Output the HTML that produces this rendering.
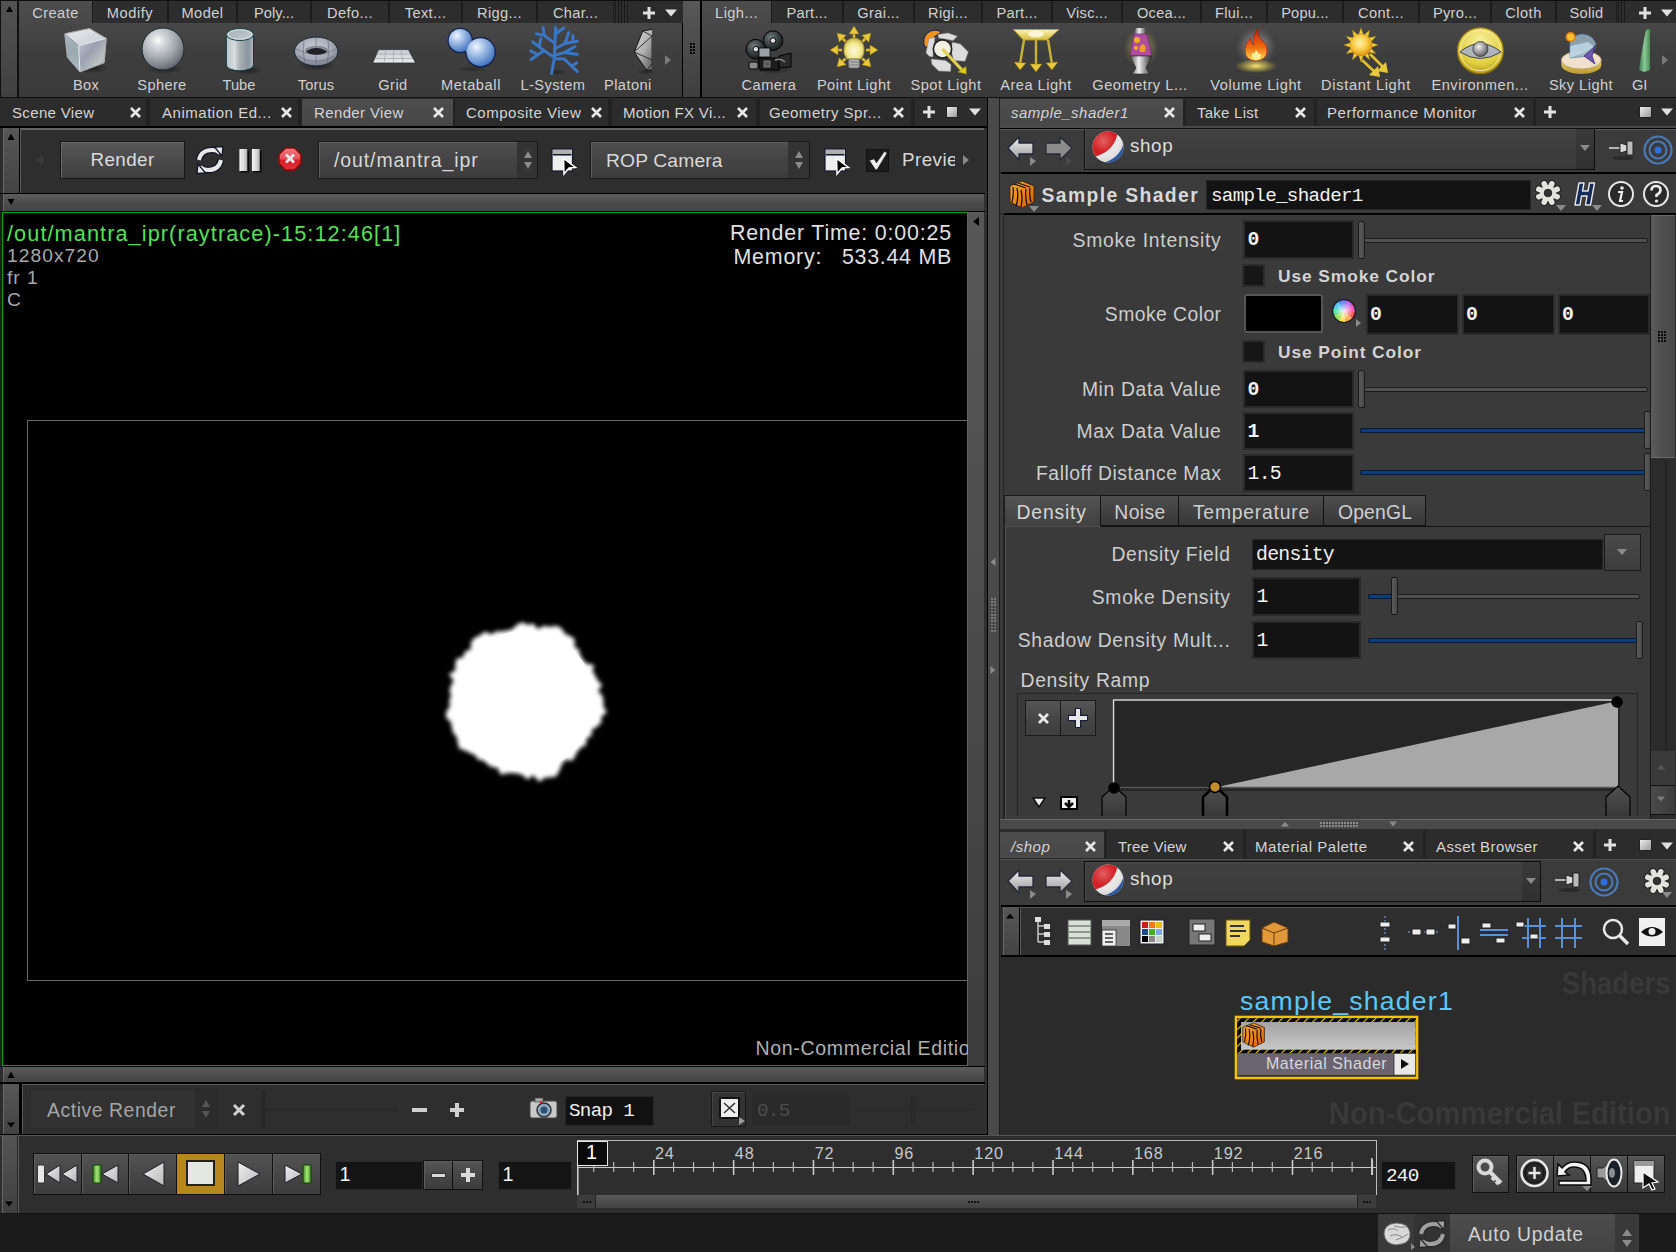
<!DOCTYPE html><html><head><meta charset="utf-8"><style>
html,body{margin:0;padding:0;}
body{width:1676px;height:1252px;overflow:hidden;position:relative;background:#3a3a3a;font-family:'Liberation Sans',sans-serif;}
body>div,body>svg{position:absolute;box-sizing:border-box;}
</style></head><body>
<div style="left:0px;top:0px;width:1676px;height:98px;background:#101010;"></div>
<div style="left:1px;top:1px;width:16px;height:96px;background:linear-gradient(#535353,#404040);"></div>
<svg style="left:4px;top:4px;" width="10" height="10" viewBox="0 0 10 10"><path d="M5.5 2 L9 8 L2 8 Z" fill="#000"/></svg>
<div style="left:19px;top:1px;width:664px;height:22px;background:#2d2d2d;"></div>
<div style="left:615px;top:1px;width:1px;height:22px;background:#1a1a1a;"></div>
<div style="left:618px;top:1px;width:1px;height:22px;background:#1a1a1a;"></div>
<div style="left:621px;top:1px;width:1px;height:22px;background:#1a1a1a;"></div>
<div style="left:624px;top:1px;width:1px;height:22px;background:#1a1a1a;"></div>
<div style="left:627px;top:1px;width:1px;height:22px;background:#1a1a1a;"></div>
<div style="left:630px;top:1px;width:53px;height:22px;background:#2b2b2b;"></div>
<div style="left:19px;top:23px;width:663px;height:74px;background:linear-gradient(#484848,#3e3e3e 40%,#3a3a3a);"></div>
<div style="left:682px;top:23px;width:1px;height:74px;background:#000;"></div>
<div style="left:683px;top:1px;width:17px;height:96px;background:linear-gradient(#585858,#3e3e3e);"></div>
<div style="left:690px;top:43px;width:2px;height:2px;background:#000;"></div>
<div style="left:693px;top:43px;width:2px;height:2px;background:#000;"></div>
<div style="left:690px;top:46px;width:2px;height:2px;background:#000;"></div>
<div style="left:693px;top:46px;width:2px;height:2px;background:#000;"></div>
<div style="left:690px;top:49px;width:2px;height:2px;background:#000;"></div>
<div style="left:693px;top:49px;width:2px;height:2px;background:#000;"></div>
<div style="left:690px;top:52px;width:2px;height:2px;background:#000;"></div>
<div style="left:693px;top:52px;width:2px;height:2px;background:#000;"></div>
<div style="left:700px;top:1px;width:2px;height:96px;background:#000;"></div>
<div style="left:702px;top:1px;width:974px;height:22px;background:#2d2d2d;"></div>
<div style="left:1618px;top:1px;width:1px;height:22px;background:#1a1a1a;"></div>
<div style="left:1621px;top:1px;width:1px;height:22px;background:#1a1a1a;"></div>
<div style="left:1624px;top:1px;width:1px;height:22px;background:#1a1a1a;"></div>
<div style="left:702px;top:23px;width:974px;height:74px;background:linear-gradient(#484848,#3e3e3e 40%,#3a3a3a);"></div>
<div style="left:19px;top:1px;width:73px;height:23px;background:linear-gradient(#4c4c4c,#484848);"></div>
<div style="left:32.2px;top:5.6px;font-size:14.63px;line-height:14.63px;font-family:'Liberation Sans',sans-serif;color:#d0d0d0;letter-spacing:0.435px;white-space:pre;">Create</div>
<div style="left:92px;top:1px;width:76px;height:22px;background:#2d2d2d;border-left:1px solid #1c1c1c;border-right:1px solid #1c1c1c;"></div>
<div style="left:106.8px;top:5.6px;font-size:14.63px;line-height:14.63px;font-family:'Liberation Sans',sans-serif;color:#d0d0d0;letter-spacing:0.551px;white-space:pre;">Modify</div>
<div style="left:168px;top:1px;width:69px;height:22px;background:#2d2d2d;border-left:1px solid #1c1c1c;border-right:1px solid #1c1c1c;"></div>
<div style="left:181.5px;top:5.6px;font-size:14.63px;line-height:14.63px;font-family:'Liberation Sans',sans-serif;color:#d0d0d0;letter-spacing:0.439px;white-space:pre;">Model</div>
<div style="left:237px;top:1px;width:74px;height:22px;background:#2d2d2d;border-left:1px solid #1c1c1c;border-right:1px solid #1c1c1c;"></div>
<div style="left:254.0px;top:5.6px;font-size:14.63px;line-height:14.63px;font-family:'Liberation Sans',sans-serif;color:#d0d0d0;letter-spacing:0.067px;white-space:pre;">Poly...</div>
<div style="left:311px;top:1px;width:78px;height:22px;background:#2d2d2d;border-left:1px solid #1c1c1c;border-right:1px solid #1c1c1c;"></div>
<div style="left:327.0px;top:5.6px;font-size:14.63px;line-height:14.63px;font-family:'Liberation Sans',sans-serif;color:#d0d0d0;letter-spacing:0.414px;white-space:pre;">Defo...</div>
<div style="left:389px;top:1px;width:73px;height:22px;background:#2d2d2d;border-left:1px solid #1c1c1c;border-right:1px solid #1c1c1c;"></div>
<div style="left:404.7px;top:5.6px;font-size:14.63px;line-height:14.63px;font-family:'Liberation Sans',sans-serif;color:#d0d0d0;letter-spacing:0.377px;white-space:pre;">Text...</div>
<div style="left:462px;top:1px;width:75px;height:22px;background:#2d2d2d;border-left:1px solid #1c1c1c;border-right:1px solid #1c1c1c;"></div>
<div style="left:477.1px;top:5.6px;font-size:14.63px;line-height:14.63px;font-family:'Liberation Sans',sans-serif;color:#d0d0d0;letter-spacing:0.351px;white-space:pre;">Rigg...</div>
<div style="left:537px;top:1px;width:77px;height:22px;background:#2d2d2d;border-left:1px solid #1c1c1c;border-right:1px solid #1c1c1c;"></div>
<div style="left:553.0px;top:5.6px;font-size:14.63px;line-height:14.63px;font-family:'Liberation Sans',sans-serif;color:#d0d0d0;letter-spacing:0.279px;white-space:pre;">Char...</div>
<div style="left:702px;top:1px;width:69px;height:23px;background:linear-gradient(#4c4c4c,#484848);"></div>
<div style="left:715.1px;top:5.6px;font-size:14.63px;line-height:14.63px;font-family:'Liberation Sans',sans-serif;color:#d0d0d0;letter-spacing:0.421px;white-space:pre;">Ligh...</div>
<div style="left:771px;top:1px;width:72px;height:22px;background:#2d2d2d;border-left:1px solid #1c1c1c;border-right:1px solid #1c1c1c;"></div>
<div style="left:786.5px;top:5.6px;font-size:14.63px;line-height:14.63px;font-family:'Liberation Sans',sans-serif;color:#d0d0d0;letter-spacing:0.280px;white-space:pre;">Part...</div>
<div style="left:843px;top:1px;width:71px;height:22px;background:#2d2d2d;border-left:1px solid #1c1c1c;border-right:1px solid #1c1c1c;"></div>
<div style="left:857.3px;top:5.6px;font-size:14.63px;line-height:14.63px;font-family:'Liberation Sans',sans-serif;color:#d0d0d0;letter-spacing:0.370px;white-space:pre;">Grai...</div>
<div style="left:914px;top:1px;width:68px;height:22px;background:#2d2d2d;border-left:1px solid #1c1c1c;border-right:1px solid #1c1c1c;"></div>
<div style="left:928.1px;top:5.6px;font-size:14.63px;line-height:14.63px;font-family:'Liberation Sans',sans-serif;color:#d0d0d0;letter-spacing:0.335px;white-space:pre;">Rigi...</div>
<div style="left:982px;top:1px;width:70px;height:22px;background:#2d2d2d;border-left:1px solid #1c1c1c;border-right:1px solid #1c1c1c;"></div>
<div style="left:996.5px;top:5.6px;font-size:14.63px;line-height:14.63px;font-family:'Liberation Sans',sans-serif;color:#d0d0d0;letter-spacing:0.280px;white-space:pre;">Part...</div>
<div style="left:1052px;top:1px;width:70px;height:22px;background:#2d2d2d;border-left:1px solid #1c1c1c;border-right:1px solid #1c1c1c;"></div>
<div style="left:1066.3px;top:5.6px;font-size:14.63px;line-height:14.63px;font-family:'Liberation Sans',sans-serif;color:#d0d0d0;letter-spacing:0.276px;white-space:pre;">Visc...</div>
<div style="left:1122px;top:1px;width:79px;height:22px;background:#2d2d2d;border-left:1px solid #1c1c1c;border-right:1px solid #1c1c1c;"></div>
<div style="left:1136.9px;top:5.6px;font-size:14.63px;line-height:14.63px;font-family:'Liberation Sans',sans-serif;color:#d0d0d0;letter-spacing:0.300px;white-space:pre;">Ocea...</div>
<div style="left:1201px;top:1px;width:66px;height:22px;background:#2d2d2d;border-left:1px solid #1c1c1c;border-right:1px solid #1c1c1c;"></div>
<div style="left:1215.0px;top:5.6px;font-size:14.63px;line-height:14.63px;font-family:'Liberation Sans',sans-serif;color:#d0d0d0;letter-spacing:0.327px;white-space:pre;">Flui...</div>
<div style="left:1267px;top:1px;width:76px;height:22px;background:#2d2d2d;border-left:1px solid #1c1c1c;border-right:1px solid #1c1c1c;"></div>
<div style="left:1281.2px;top:5.6px;font-size:14.63px;line-height:14.63px;font-family:'Liberation Sans',sans-serif;color:#d0d0d0;letter-spacing:0.180px;white-space:pre;">Popu...</div>
<div style="left:1343px;top:1px;width:76px;height:22px;background:#2d2d2d;border-left:1px solid #1c1c1c;border-right:1px solid #1c1c1c;"></div>
<div style="left:1358.0px;top:5.6px;font-size:14.63px;line-height:14.63px;font-family:'Liberation Sans',sans-serif;color:#d0d0d0;letter-spacing:0.422px;white-space:pre;">Cont...</div>
<div style="left:1419px;top:1px;width:72px;height:22px;background:#2d2d2d;border-left:1px solid #1c1c1c;border-right:1px solid #1c1c1c;"></div>
<div style="left:1433.1px;top:5.6px;font-size:14.63px;line-height:14.63px;font-family:'Liberation Sans',sans-serif;color:#d0d0d0;letter-spacing:0.224px;white-space:pre;">Pyro...</div>
<div style="left:1491px;top:1px;width:65px;height:22px;background:#2d2d2d;border-left:1px solid #1c1c1c;border-right:1px solid #1c1c1c;"></div>
<div style="left:1505.2px;top:5.6px;font-size:14.63px;line-height:14.63px;font-family:'Liberation Sans',sans-serif;color:#d0d0d0;letter-spacing:0.488px;white-space:pre;">Cloth</div>
<div style="left:1556px;top:1px;width:61px;height:22px;background:#2d2d2d;border-left:1px solid #1c1c1c;border-right:1px solid #1c1c1c;"></div>
<div style="left:1569.4px;top:5.6px;font-size:14.63px;line-height:14.63px;font-family:'Liberation Sans',sans-serif;color:#d0d0d0;letter-spacing:0.318px;white-space:pre;">Solid</div>
<svg style="left:641.5px;top:5.5px;" width="14" height="14" viewBox="0 0 14 14"><path d="M7 1 V13 M1 7 H13" stroke="#e0e0e0" stroke-width="3"/></svg>
<svg style="left:665px;top:7px;" width="12" height="12" viewBox="0 0 12 12"><path d="M0 2.4000000000000004 H12 L6 9.600000000000001 Z" fill="#e0e0e0"/></svg>
<svg style="left:1638px;top:5.5px;" width="14" height="14" viewBox="0 0 14 14"><path d="M7 1 V13 M1 7 H13" stroke="#e0e0e0" stroke-width="3"/></svg>
<svg style="left:1661px;top:7px;" width="12" height="12" viewBox="0 0 12 12"><path d="M0 2.4000000000000004 H12 L6 9.600000000000001 Z" fill="#e0e0e0"/></svg>
<svg style="left:663px;top:55px;" width="10" height="10" viewBox="0 0 10 10"><path d="M2.0 0 V10 L8.0 5 Z" fill="#7a7a7a"/></svg>
<svg style="left:1660px;top:55px;" width="10" height="10" viewBox="0 0 10 10"><path d="M2.0 0 V10 L8.0 5 Z" fill="#7a7a7a"/></svg>
<div style="left:73.0px;top:77.6px;font-size:14.63px;line-height:14.63px;font-family:'Liberation Sans',sans-serif;color:#d0d0d0;letter-spacing:0.273px;white-space:pre;">Box</div>
<div style="left:137.3px;top:77.6px;font-size:14.63px;line-height:14.63px;font-family:'Liberation Sans',sans-serif;color:#d0d0d0;letter-spacing:0.359px;white-space:pre;">Sphere</div>
<div style="left:222.6px;top:77.6px;font-size:14.63px;line-height:14.63px;font-family:'Liberation Sans',sans-serif;color:#d0d0d0;letter-spacing:-0.000px;white-space:pre;">Tube</div>
<div style="left:297.7px;top:77.6px;font-size:14.63px;line-height:14.63px;font-family:'Liberation Sans',sans-serif;color:#d0d0d0;letter-spacing:0.178px;white-space:pre;">Torus</div>
<div style="left:378.3px;top:77.6px;font-size:14.63px;line-height:14.63px;font-family:'Liberation Sans',sans-serif;color:#d0d0d0;letter-spacing:0.436px;white-space:pre;">Grid</div>
<div style="left:441.0px;top:77.6px;font-size:14.63px;line-height:14.63px;font-family:'Liberation Sans',sans-serif;color:#d0d0d0;letter-spacing:0.589px;white-space:pre;">Metaball</div>
<div style="left:520.6px;top:77.6px;font-size:14.63px;line-height:14.63px;font-family:'Liberation Sans',sans-serif;color:#d0d0d0;letter-spacing:0.379px;white-space:pre;">L-System</div>
<div style="left:604.0px;top:77.6px;font-size:14.63px;line-height:14.63px;font-family:'Liberation Sans',sans-serif;color:#d0d0d0;letter-spacing:0.428px;white-space:pre;">Platoni</div>
<div style="left:741.5px;top:77.6px;font-size:14.63px;line-height:14.63px;font-family:'Liberation Sans',sans-serif;color:#d0d0d0;letter-spacing:0.485px;white-space:pre;">Camera</div>
<div style="left:816.9px;top:77.6px;font-size:14.63px;line-height:14.63px;font-family:'Liberation Sans',sans-serif;color:#d0d0d0;letter-spacing:0.456px;white-space:pre;">Point Light</div>
<div style="left:910.4px;top:77.6px;font-size:14.63px;line-height:14.63px;font-family:'Liberation Sans',sans-serif;color:#d0d0d0;letter-spacing:0.534px;white-space:pre;">Spot Light</div>
<div style="left:1000.2px;top:77.6px;font-size:14.63px;line-height:14.63px;font-family:'Liberation Sans',sans-serif;color:#d0d0d0;letter-spacing:0.492px;white-space:pre;">Area Light</div>
<div style="left:1092.3px;top:77.6px;font-size:14.63px;line-height:14.63px;font-family:'Liberation Sans',sans-serif;color:#d0d0d0;letter-spacing:0.522px;white-space:pre;">Geometry L...</div>
<div style="left:1210.3px;top:77.6px;font-size:14.63px;line-height:14.63px;font-family:'Liberation Sans',sans-serif;color:#d0d0d0;letter-spacing:0.573px;white-space:pre;">Volume Light</div>
<div style="left:1321.1px;top:77.6px;font-size:14.63px;line-height:14.63px;font-family:'Liberation Sans',sans-serif;color:#d0d0d0;letter-spacing:0.651px;white-space:pre;">Distant Light</div>
<div style="left:1431.4px;top:77.6px;font-size:14.63px;line-height:14.63px;font-family:'Liberation Sans',sans-serif;color:#d0d0d0;letter-spacing:0.538px;white-space:pre;">Environmen...</div>
<div style="left:1548.9px;top:77.6px;font-size:14.63px;line-height:14.63px;font-family:'Liberation Sans',sans-serif;color:#d0d0d0;letter-spacing:0.444px;white-space:pre;">Sky Light</div>
<div style="left:1632.0px;top:77.6px;font-size:14.63px;line-height:14.63px;font-family:'Liberation Sans',sans-serif;color:#d0d0d0;letter-spacing:-0.233px;white-space:pre;">GI</div>
<div style="left:0px;top:98px;width:1676px;height:1037px;background:#2c2c2c;"></div>
<div style="left:0px;top:98px;width:987px;height:28px;background:#2c2c2c;"></div>
<div style="left:0px;top:126px;width:987px;height:2px;background:#000;"></div>
<div style="left:146px;top:99px;width:4px;height:27px;background:#222;"></div>
<div style="left:298px;top:99px;width:4px;height:27px;background:#222;"></div>
<div style="left:451px;top:99px;width:4px;height:27px;background:#222;"></div>
<div style="left:608px;top:99px;width:4px;height:27px;background:#222;"></div>
<div style="left:756px;top:99px;width:4px;height:27px;background:#222;"></div>
<div style="left:911px;top:99px;width:4px;height:27px;background:#222;"></div>
<div style="left:302px;top:99px;width:151px;height:27px;background:linear-gradient(#4d4d4d,#474747);"></div>
<div style="left:12.0px;top:105.3px;font-size:15.00px;line-height:15.00px;font-family:'Liberation Sans',sans-serif;color:#d4d4d4;letter-spacing:0.345px;white-space:pre;">Scene View</div>
<svg style="left:128.5px;top:105.5px;" width="13.0" height="13.0" viewBox="0 0 13.0 13.0"><path d="M2 2 L11.0 11.0 M11.0 2 L2 11.0" stroke="#e8e8e8" stroke-width="2.6" stroke-linecap="butt"/></svg>
<div style="left:162.0px;top:105.3px;font-size:15.00px;line-height:15.00px;font-family:'Liberation Sans',sans-serif;color:#d4d4d4;letter-spacing:0.526px;white-space:pre;">Animation Ed...</div>
<svg style="left:279.5px;top:105.5px;" width="13.0" height="13.0" viewBox="0 0 13.0 13.0"><path d="M2 2 L11.0 11.0 M11.0 2 L2 11.0" stroke="#e8e8e8" stroke-width="2.6" stroke-linecap="butt"/></svg>
<div style="left:314.0px;top:105.3px;font-size:15.00px;line-height:15.00px;font-family:'Liberation Sans',sans-serif;color:#d4d4d4;letter-spacing:0.375px;white-space:pre;">Render View</div>
<svg style="left:432.0px;top:105.5px;" width="13.0" height="13.0" viewBox="0 0 13.0 13.0"><path d="M2 2 L11.0 11.0 M11.0 2 L2 11.0" stroke="#e8e8e8" stroke-width="2.6" stroke-linecap="butt"/></svg>
<div style="left:466.0px;top:105.3px;font-size:15.00px;line-height:15.00px;font-family:'Liberation Sans',sans-serif;color:#d4d4d4;letter-spacing:0.509px;white-space:pre;">Composite View</div>
<svg style="left:589.5px;top:105.5px;" width="13.0" height="13.0" viewBox="0 0 13.0 13.0"><path d="M2 2 L11.0 11.0 M11.0 2 L2 11.0" stroke="#e8e8e8" stroke-width="2.6" stroke-linecap="butt"/></svg>
<div style="left:623.0px;top:105.3px;font-size:15.00px;line-height:15.00px;font-family:'Liberation Sans',sans-serif;color:#d4d4d4;letter-spacing:0.331px;white-space:pre;">Motion FX Vi...</div>
<svg style="left:735.5px;top:105.5px;" width="13.0" height="13.0" viewBox="0 0 13.0 13.0"><path d="M2 2 L11.0 11.0 M11.0 2 L2 11.0" stroke="#e8e8e8" stroke-width="2.6" stroke-linecap="butt"/></svg>
<div style="left:769.0px;top:105.3px;font-size:15.00px;line-height:15.00px;font-family:'Liberation Sans',sans-serif;color:#d4d4d4;letter-spacing:0.507px;white-space:pre;">Geometry Spr...</div>
<svg style="left:891.5px;top:105.5px;" width="13.0" height="13.0" viewBox="0 0 13.0 13.0"><path d="M2 2 L11.0 11.0 M11.0 2 L2 11.0" stroke="#e8e8e8" stroke-width="2.6" stroke-linecap="butt"/></svg>
<svg style="left:922px;top:105px;" width="14" height="14" viewBox="0 0 14 14"><path d="M7 1 V13 M1 7 H13" stroke="#e0e0e0" stroke-width="3"/></svg>
<div style="left:946px;top:106px;width:12px;height:12px;background:linear-gradient(135deg,#eee,#999);border:1px solid #222"></div>
<svg style="left:969px;top:106px;" width="12" height="12" viewBox="0 0 12 12"><path d="M0 2.4000000000000004 H12 L6 9.600000000000001 Z" fill="#e0e0e0"/></svg>
<div style="left:987px;top:98px;width:1px;height:1037px;background:#000;"></div>
<div style="left:984px;top:128px;width:3px;height:1007px;background:#303030;"></div>
<div style="left:3px;top:128px;width:16px;height:65px;background:linear-gradient(#575757,#434343);border-left:1px solid #6a6a6a"></div>
<svg style="left:6px;top:132px;" width="10" height="10" viewBox="0 0 10 10"><path d="M5 1.5 L8.5 8 L1.5 8 Z" fill="#000"/></svg>
<div style="left:19px;top:128px;width:1px;height:65px;background:#000;"></div>
<div style="left:20px;top:128px;width:964px;height:65px;background:#2e2e2e;border-top:2px solid #646464;border-left:1px solid #5a5a5a"></div>
<svg style="left:35px;top:155px;" width="10" height="10" viewBox="0 0 10 10"><path d="M8.0 0 V10 L2.0 5 Z" fill="#3c3c3c"/></svg>
<div style="left:60px;top:141px;width:125px;height:38px;background:linear-gradient(#585858,#4a4a4a 50%,#3f3f3f);border:1px solid #161616;box-shadow:inset 1px 1px 0 #6a6a6a;"></div>
<div style="left:90.5px;top:151.1px;font-size:18.81px;line-height:18.81px;font-family:'Liberation Sans',sans-serif;color:#dcdcdc;letter-spacing:0.400px;white-space:pre;">Render</div>
<div style="left:318px;top:141px;width:220px;height:38px;background:linear-gradient(#4e4e4e,#444 50%,#3c3c3c);border:1px solid #1a1a1a;box-shadow:inset 1px 1px 0 #5e5e5e;"></div>
<div style="left:517px;top:142px;width:20px;height:36px;background:#333;"></div>
<svg style="left:522.5px;top:149.0px;" width="10" height="22" viewBox="0 0 10 22"><path d="M1 9 L5 2 L9 9 Z M1 13 L5 20 L9 13 Z" fill="#8a8a8a"/></svg>
<div style="left:334.0px;top:150.5px;font-size:19.44px;line-height:19.44px;font-family:'Liberation Sans',sans-serif;color:#d8d8d8;letter-spacing:0.923px;white-space:pre;">/out/mantra_ipr</div>
<div style="left:590px;top:141px;width:220px;height:38px;background:linear-gradient(#4e4e4e,#444 50%,#3c3c3c);border:1px solid #1a1a1a;box-shadow:inset 1px 1px 0 #5e5e5e;"></div>
<div style="left:788px;top:142px;width:21px;height:36px;background:#333;"></div>
<svg style="left:794.0px;top:149.0px;" width="10" height="22" viewBox="0 0 10 22"><path d="M1 9 L5 2 L9 9 Z M1 13 L5 20 L9 13 Z" fill="#8a8a8a"/></svg>
<div style="left:606.0px;top:150.7px;font-size:19.28px;line-height:19.28px;font-family:'Liberation Sans',sans-serif;color:#d8d8d8;letter-spacing:0.138px;white-space:pre;">ROP Camera</div>
<div style="left:866px;top:149px;width:23px;height:23px;background:#1c1c1c;border:1px solid #111"></div>
<svg style="left:866px;top:149px;" width="23" height="23" viewBox="0 0 23 23"><path d="M3.5 11.5 L8 10 L10.5 14 L18.5 2.5 L21 4 L11 20.5 L9.5 20.5 Z" fill="#f0f0f0" stroke="#333" stroke-width="0.5"/></svg>
<div style="left:902.0px;top:151.1px;font-size:18.81px;line-height:18.81px;font-family:'Liberation Sans',sans-serif;color:#d8d8d8;letter-spacing:0.453px;white-space:pre;width:53px;overflow:hidden;">Preview</div>
<svg style="left:961px;top:155px;" width="10" height="10" viewBox="0 0 10 10"><path d="M2.0 0 V10 L8.0 5 Z" fill="#8a8a8a"/></svg>
<div style="left:3px;top:194px;width:981px;height:17px;background:linear-gradient(#5c5c5c,#4a4a4a 60%,#444);border-left:1px solid #6a6a6a"></div>
<svg style="left:6px;top:197px;" width="10" height="10" viewBox="0 0 10 10"><path d="M1.5 2 L8.5 2 L5 8 Z" fill="#000"/></svg>
<div style="left:0px;top:193px;width:985px;height:1px;background:#000;"></div>
<div style="left:0px;top:211px;width:985px;height:1px;background:#000;"></div>
<div style="left:0px;top:212px;width:2px;height:854px;background:#1e1e1e;"></div>
<div style="left:2px;top:212px;width:965px;height:854px;background:#000;border-top:1px solid #00a400;border-left:1px solid #00a400;border-bottom:1px solid #00a400"></div>
<div style="left:27px;top:420px;width:940px;height:561px;background:none;border:1px solid #686868;border-right:none"></div>
<div style="left:967px;top:212px;width:17px;height:854px;background:linear-gradient(#575757,#4e4e4e 40%,#3c3c3c);border-left:1px solid #666"></div>
<svg style="left:971px;top:216px;" width="10" height="12" viewBox="0 0 10 12"><path d="M8 1 V10 L2 5.5 Z" fill="#000"/></svg>
<svg style="left:430px;top:606px;" width="190" height="190" viewBox="0 0 190 190"><defs><filter id="bl" x="-20%" y="-20%" width="140%" height="140%"><feGaussianBlur stdDeviation="2.2"/></filter></defs><path filter="url(#bl)" fill="#fff" d="M173.4 95.0 L173.4 100.4 L176.9 106.3 L171.2 110.9 L171.5 116.5 L166.9 120.7 L161.7 124.1 L161.8 129.8 L156.4 132.6 L156.3 138.7 L151.3 141.3 L147.8 144.9 L145.2 149.7 L142.6 154.7 L135.5 153.8 L132.0 157.9 L129.5 164.4 L126.1 170.4 L120.2 171.2 L114.5 171.7 L109.6 176.1 L102.9 169.0 L97.8 173.8 L92.4 169.1 L87.2 167.6 L82.1 167.0 L76.6 167.3 L70.6 168.7 L67.5 161.8 L62.1 161.2 L57.5 158.6 L54.0 154.7 L48.2 153.8 L45.1 149.3 L40.0 147.0 L34.9 144.5 L28.8 142.2 L27.8 136.2 L26.6 130.7 L22.9 126.5 L21.8 121.1 L20.8 115.9 L15.9 111.5 L16.1 105.9 L20.0 100.1 L19.1 95.0 L21.0 89.9 L19.6 84.6 L20.9 79.6 L23.7 75.0 L18.9 67.9 L25.4 64.6 L25.3 58.7 L26.2 52.9 L33.3 51.0 L34.9 45.6 L40.7 43.6 L41.0 36.2 L44.5 31.7 L50.0 29.6 L54.2 25.7 L61.7 28.2 L66.3 25.3 L71.9 25.4 L77.0 24.4 L82.1 23.4 L86.8 18.7 L92.2 16.2 L97.7 18.8 L103.3 17.8 L108.0 23.0 L114.1 19.7 L119.5 21.1 L126.0 19.7 L131.3 22.1 L134.8 27.4 L139.7 30.0 L144.6 32.8 L144.5 41.1 L149.1 43.8 L150.2 49.6 L153.0 53.7 L156.1 57.5 L164.0 59.0 L162.7 65.4 L165.5 69.9 L167.7 74.6 L172.2 78.9 L168.0 84.9 L172.5 89.7 Z"/><circle cx="95" cy="95" r="70" fill="#fff"/></svg>
<div style="left:7.0px;top:222.6px;font-size:21.68px;line-height:21.68px;font-family:'Liberation Sans',sans-serif;color:#55e055;letter-spacing:1.089px;white-space:pre;">/out/mantra_ipr(raytrace)-15:12:46[1]</div>
<div style="left:7.0px;top:245.7px;font-size:19.23px;line-height:19.23px;font-family:'Liberation Sans',sans-serif;color:#a8a8a8;letter-spacing:1.047px;white-space:pre;">1280x720</div>
<div style="left:7.0px;top:267.7px;font-size:19.23px;line-height:19.23px;font-family:'Liberation Sans',sans-serif;color:#a8a8a8;letter-spacing:0.954px;white-space:pre;">fr 1</div>
<div style="left:7.0px;top:290.2px;font-size:19.23px;line-height:19.23px;font-family:'Liberation Sans',sans-serif;color:#a8a8a8;letter-spacing:-1.038px;white-space:pre;">C</div>
<div style="left:729.9px;top:222.9px;font-size:21.42px;line-height:21.42px;font-family:'Liberation Sans',sans-serif;color:#e0e0e0;letter-spacing:0.806px;white-space:pre;">Render Time: 0:00:25</div>
<div style="left:733.5px;top:246.9px;font-size:21.42px;line-height:21.42px;font-family:'Liberation Sans',sans-serif;color:#e0e0e0;letter-spacing:0.782px;white-space:pre;">Memory:</div>
<div style="left:842.0px;top:246.9px;font-size:21.42px;line-height:21.42px;font-family:'Liberation Sans',sans-serif;color:#e0e0e0;letter-spacing:0.711px;white-space:pre;">533.44 MB</div>
<div style="left:755.5px;top:1038.5px;font-size:19.54px;line-height:19.54px;font-family:'Liberation Sans',sans-serif;color:#b0b0b0;letter-spacing:0.671px;white-space:pre;width:212px;overflow:hidden;">Non-Commercial Edition</div>
<div style="left:0px;top:1066px;width:985px;height:1px;background:#000;"></div>
<div style="left:3px;top:1067px;width:981px;height:16px;background:linear-gradient(#5c5c5c,#4a4a4a 60%,#444);border-left:1px solid #6a6a6a"></div>
<svg style="left:6px;top:1070px;" width="10" height="10" viewBox="0 0 10 10"><path d="M5 1.5 L8.5 8 L1.5 8 Z" fill="#000"/></svg>
<div style="left:0px;top:1082px;width:985px;height:2px;background:#000;"></div>
<div style="left:3px;top:1084px;width:16px;height:51px;background:linear-gradient(#575757,#434343);border-left:1px solid #6a6a6a"></div>
<svg style="left:7px;top:1121px;" width="8" height="8" viewBox="0 0 8 8"><path d="M0 1.6 H8 L4 6.4 Z" fill="#000"/></svg>
<div style="left:19px;top:1084px;width:3px;height:51px;background:#000;"></div>
<div style="left:22px;top:1084px;width:962px;height:51px;background:#2e2e2e;border-top:1px solid #5a5a5a;border-left:1px solid #5a5a5a"></div>
<div style="left:0px;top:1134px;width:1676px;height:1px;background:#000;"></div>
<div style="left:0px;top:1135px;width:1676px;height:78px;background:#2e2e2e;border-top:1px solid #555"></div>
<div style="left:2px;top:1136px;width:15px;height:77px;background:linear-gradient(#545454,#404040);border-left:1px solid #666"></div>
<svg style="left:5px;top:1200px;" width="8" height="8" viewBox="0 0 8 8"><path d="M0 1.6 H8 L4 6.4 Z" fill="#000"/></svg>
<div style="left:17px;top:1136px;width:1px;height:77px;background:#262626;"></div>
<div style="left:18px;top:1136px;width:1px;height:77px;background:#5a5a5a;"></div>
<div style="left:0px;top:1213px;width:1676px;height:39px;background:#1b1b1b;border-top:1px solid #111"></div>
<div style="left:988px;top:98px;width:11px;height:1037px;background:#4a4a4a;"></div>
<div style="left:999px;top:98px;width:1px;height:1037px;background:#1c1c1c;"></div>
<svg style="left:989px;top:557px;" width="8" height="10" viewBox="0 0 8 10"><path d="M6.5 1 V9 L1.5 5 Z" fill="#8a8a8a"/></svg>
<svg style="left:989px;top:665px;" width="8" height="10" viewBox="0 0 8 10"><path d="M1.5 1 V9 L6.5 5 Z" fill="#8a8a8a"/></svg>
<div style="left:991px;top:598.0px;width:1.6px;height:1.6px;background:#7a7a7a;"></div>
<div style="left:994px;top:598.0px;width:1.6px;height:1.6px;background:#7a7a7a;"></div>
<div style="left:991px;top:601.2px;width:1.6px;height:1.6px;background:#7a7a7a;"></div>
<div style="left:994px;top:601.2px;width:1.6px;height:1.6px;background:#7a7a7a;"></div>
<div style="left:991px;top:604.4px;width:1.6px;height:1.6px;background:#7a7a7a;"></div>
<div style="left:994px;top:604.4px;width:1.6px;height:1.6px;background:#7a7a7a;"></div>
<div style="left:991px;top:607.6px;width:1.6px;height:1.6px;background:#7a7a7a;"></div>
<div style="left:994px;top:607.6px;width:1.6px;height:1.6px;background:#7a7a7a;"></div>
<div style="left:991px;top:610.8px;width:1.6px;height:1.6px;background:#7a7a7a;"></div>
<div style="left:994px;top:610.8px;width:1.6px;height:1.6px;background:#7a7a7a;"></div>
<div style="left:991px;top:614.0px;width:1.6px;height:1.6px;background:#7a7a7a;"></div>
<div style="left:994px;top:614.0px;width:1.6px;height:1.6px;background:#7a7a7a;"></div>
<div style="left:991px;top:617.2px;width:1.6px;height:1.6px;background:#7a7a7a;"></div>
<div style="left:994px;top:617.2px;width:1.6px;height:1.6px;background:#7a7a7a;"></div>
<div style="left:991px;top:620.4px;width:1.6px;height:1.6px;background:#7a7a7a;"></div>
<div style="left:994px;top:620.4px;width:1.6px;height:1.6px;background:#7a7a7a;"></div>
<div style="left:991px;top:623.6px;width:1.6px;height:1.6px;background:#7a7a7a;"></div>
<div style="left:994px;top:623.6px;width:1.6px;height:1.6px;background:#7a7a7a;"></div>
<div style="left:991px;top:626.8px;width:1.6px;height:1.6px;background:#7a7a7a;"></div>
<div style="left:994px;top:626.8px;width:1.6px;height:1.6px;background:#7a7a7a;"></div>
<div style="left:991px;top:630.0px;width:1.6px;height:1.6px;background:#7a7a7a;"></div>
<div style="left:994px;top:630.0px;width:1.6px;height:1.6px;background:#7a7a7a;"></div>
<div style="left:1000px;top:98px;width:676px;height:28px;background:#2c2c2c;"></div>
<div style="left:1000px;top:126px;width:676px;height:2px;background:#4a4a4a;"></div>
<div style="left:1000px;top:128px;width:676px;height:1px;background:#000;"></div>
<div style="left:1000px;top:99px;width:184px;height:27px;background:linear-gradient(#4d4d4d,#474747);"></div>
<div style="left:1183px;top:99px;width:3px;height:27px;background:#222;"></div>
<div style="left:1314px;top:99px;width:3px;height:27px;background:#222;"></div>
<div style="left:1533px;top:99px;width:3px;height:27px;background:#222;"></div>
<div style="left:1011.0px;top:105.3px;font-size:15.00px;line-height:15.00px;font-family:'Liberation Sans',sans-serif;color:#d4d4d4;letter-spacing:0.487px;white-space:pre;font-style:italic;">sample_shader1</div>
<svg style="left:1162.5px;top:105.5px;" width="13.0" height="13.0" viewBox="0 0 13.0 13.0"><path d="M2 2 L11.0 11.0 M11.0 2 L2 11.0" stroke="#e8e8e8" stroke-width="2.6" stroke-linecap="butt"/></svg>
<div style="left:1197.0px;top:105.3px;font-size:15.00px;line-height:15.00px;font-family:'Liberation Sans',sans-serif;color:#d4d4d4;letter-spacing:0.253px;white-space:pre;">Take List</div>
<svg style="left:1293.5px;top:105.5px;" width="13.0" height="13.0" viewBox="0 0 13.0 13.0"><path d="M2 2 L11.0 11.0 M11.0 2 L2 11.0" stroke="#e8e8e8" stroke-width="2.6" stroke-linecap="butt"/></svg>
<div style="left:1327.0px;top:105.3px;font-size:15.00px;line-height:15.00px;font-family:'Liberation Sans',sans-serif;color:#d4d4d4;letter-spacing:0.528px;white-space:pre;">Performance Monitor</div>
<svg style="left:1512.5px;top:105.5px;" width="13.0" height="13.0" viewBox="0 0 13.0 13.0"><path d="M2 2 L11.0 11.0 M11.0 2 L2 11.0" stroke="#e8e8e8" stroke-width="2.6" stroke-linecap="butt"/></svg>
<svg style="left:1543px;top:105px;" width="14" height="14" viewBox="0 0 14 14"><path d="M7 1 V13 M1 7 H13" stroke="#e0e0e0" stroke-width="3"/></svg>
<div style="left:1639px;top:106px;width:13px;height:12px;background:linear-gradient(135deg,#eee,#999);border:1px solid #222"></div>
<svg style="left:1661px;top:106px;" width="12" height="12" viewBox="0 0 12 12"><path d="M0 2.4000000000000004 H12 L6 9.600000000000001 Z" fill="#e0e0e0"/></svg>
<div style="left:1000px;top:129px;width:676px;height:43px;background:#3b3b3b;border-top:1px solid #5a5a5a"></div>
<div style="left:1084px;top:128px;width:511px;height:42px;background:linear-gradient(#414141,#3a3a3a);border:1px solid #0e0e0e;box-shadow:inset 1px 1px 0 #4a4a4a"></div>
<div style="left:1576px;top:129px;width:18px;height:40px;background:linear-gradient(#3a3a3a,#303030);"></div>
<svg style="left:1580px;top:143px;" width="10" height="10" viewBox="0 0 10 10"><path d="M0 2.0 H10 L5 8.0 Z" fill="#8a8a8a"/></svg>
<div style="left:1130.0px;top:137.1px;font-size:18.81px;line-height:18.81px;font-family:'Liberation Sans',sans-serif;color:#dedede;letter-spacing:0.610px;white-space:pre;">shop</div>
<div style="left:1001px;top:172px;width:675px;height:2px;background:#000;"></div>
<div style="left:1000px;top:174px;width:676px;height:39px;background:#3b3b3b;"></div>
<div style="left:1041.5px;top:185.6px;font-size:19.33px;line-height:19.33px;font-family:'Liberation Sans',sans-serif;color:#d8d8d8;letter-spacing:1.375px;white-space:pre;font-weight:bold;">Sample Shader</div>
<div style="left:1206px;top:180px;width:325px;height:30px;background:#131313;border:1px solid #262626"></div>
<div style="left:1211.0px;top:186.9px;font-size:19.26px;line-height:19.26px;font-family:'Liberation Mono',monospace;color:#f2f2f2;letter-spacing:-0.722px;white-space:pre;">sample_shader1</div>
<div style="left:1004px;top:213px;width:672px;height:2px;background:#000;"></div>
<div style="left:1000px;top:215px;width:650px;height:604px;background:#3a3a3a;"></div>
<div style="left:1003px;top:215px;width:1px;height:604px;background:#262626;"></div>
<div style="left:1072.6px;top:230.6px;font-size:19.33px;line-height:19.33px;font-family:'Liberation Sans',sans-serif;color:#cdcdcd;letter-spacing:0.760px;white-space:pre;">Smoke Intensity</div>
<div style="left:1243px;top:220px;width:111px;height:39px;background:#131313;border:2px solid #2a2a2a"></div>
<div style="left:1247.5px;top:231.1px;font-size:19.80px;line-height:19.80px;font-family:'Liberation Mono',monospace;color:#f4f4f4;letter-spacing:-0.743px;white-space:pre;font-weight:bold;">0</div>
<div style="left:1362px;top:237.5px;width:286px;height:5px;background:#505050;border:1px solid #1c1c1c;border-radius:2px"></div>
<div style="left:1357.5px;top:220.5px;width:7px;height:38px;background:linear-gradient(90deg,#5a5a5a,#4a4a4a);border:1px solid #1a1a1a;border-radius:2px"></div>
<div style="left:1242px;top:264px;width:23px;height:23px;background:#161616;border:2px solid #2c2c2c"></div>
<div style="left:1278.0px;top:267.9px;font-size:17.35px;line-height:17.35px;font-family:'Liberation Sans',sans-serif;color:#d4d4d4;letter-spacing:0.928px;white-space:pre;font-weight:bold;">Use Smoke Color</div>
<div style="left:1104.8px;top:304.6px;font-size:19.33px;line-height:19.33px;font-family:'Liberation Sans',sans-serif;color:#cdcdcd;letter-spacing:0.452px;white-space:pre;">Smoke Color</div>
<div style="left:1244px;top:294px;width:79px;height:39px;background:#000;border:2px solid #555;border-radius:3px"></div>
<div style="left:1365.5px;top:294px;width:93px;height:41px;background:#131313;border:2px solid #2a2a2a"></div>
<div style="left:1370.0px;top:306.1px;font-size:19.80px;line-height:19.80px;font-family:'Liberation Mono',monospace;color:#f4f4f4;letter-spacing:-0.743px;white-space:pre;font-weight:bold;">0</div>
<div style="left:1461.5px;top:294px;width:93px;height:41px;background:#131313;border:2px solid #2a2a2a"></div>
<div style="left:1466.0px;top:306.1px;font-size:19.80px;line-height:19.80px;font-family:'Liberation Mono',monospace;color:#f4f4f4;letter-spacing:-0.743px;white-space:pre;font-weight:bold;">0</div>
<div style="left:1557.5px;top:294px;width:92px;height:41px;background:#131313;border:2px solid #2a2a2a"></div>
<div style="left:1562.0px;top:306.1px;font-size:19.80px;line-height:19.80px;font-family:'Liberation Mono',monospace;color:#f4f4f4;letter-spacing:-0.743px;white-space:pre;font-weight:bold;">0</div>
<div style="left:1242px;top:340px;width:23px;height:23px;background:#161616;border:2px solid #2c2c2c"></div>
<div style="left:1278.0px;top:343.8px;font-size:17.35px;line-height:17.35px;font-family:'Liberation Sans',sans-serif;color:#d4d4d4;letter-spacing:0.930px;white-space:pre;font-weight:bold;">Use Point Color</div>
<div style="left:1081.9px;top:379.6px;font-size:19.33px;line-height:19.33px;font-family:'Liberation Sans',sans-serif;color:#cdcdcd;letter-spacing:0.630px;white-space:pre;">Min Data Value</div>
<div style="left:1243px;top:370px;width:111px;height:38px;background:#131313;border:2px solid #2a2a2a"></div>
<div style="left:1247.5px;top:380.6px;font-size:19.80px;line-height:19.80px;font-family:'Liberation Mono',monospace;color:#f4f4f4;letter-spacing:-0.743px;white-space:pre;font-weight:bold;">0</div>
<div style="left:1362px;top:386.5px;width:286px;height:5px;background:#505050;border:1px solid #1c1c1c;border-radius:2px"></div>
<div style="left:1357.5px;top:369.5px;width:7px;height:38px;background:linear-gradient(90deg,#5a5a5a,#4a4a4a);border:1px solid #1a1a1a;border-radius:2px"></div>
<div style="left:1076.5px;top:421.6px;font-size:19.33px;line-height:19.33px;font-family:'Liberation Sans',sans-serif;color:#cdcdcd;letter-spacing:0.634px;white-space:pre;">Max Data Value</div>
<div style="left:1243px;top:412px;width:111px;height:38px;background:#131313;border:2px solid #2a2a2a"></div>
<div style="left:1247.5px;top:422.6px;font-size:19.80px;line-height:19.80px;font-family:'Liberation Mono',monospace;color:#f4f4f4;letter-spacing:-0.743px;white-space:pre;font-weight:bold;">1</div>
<div style="left:1360px;top:428px;width:287px;height:5px;background:#505050;border:1px solid #1c1c1c;border-radius:2px"></div>
<div style="left:1360px;top:428px;width:286.5px;height:5px;background:#0e3c7c;border:1px solid #0a1a30;border-radius:2px"></div>
<div style="left:1643.5px;top:411.0px;width:7px;height:38px;background:linear-gradient(90deg,#5a5a5a,#4a4a4a);border:1px solid #1a1a1a;border-radius:2px"></div>
<div style="left:1036.0px;top:463.6px;font-size:19.33px;line-height:19.33px;font-family:'Liberation Sans',sans-serif;color:#cdcdcd;letter-spacing:0.538px;white-space:pre;">Falloff Distance Max</div>
<div style="left:1243px;top:454px;width:111px;height:38px;background:#131313;border:2px solid #2a2a2a"></div>
<div style="left:1247.5px;top:464.6px;font-size:19.80px;line-height:19.80px;font-family:'Liberation Mono',monospace;color:#f4f4f4;letter-spacing:-0.743px;white-space:pre;">1.5</div>
<div style="left:1360px;top:470px;width:287px;height:5px;background:#505050;border:1px solid #1c1c1c;border-radius:2px"></div>
<div style="left:1360px;top:470px;width:286.5px;height:5px;background:#0e3c7c;border:1px solid #0a1a30;border-radius:2px"></div>
<div style="left:1643.5px;top:453.0px;width:7px;height:38px;background:linear-gradient(90deg,#5a5a5a,#4a4a4a);border:1px solid #1a1a1a;border-radius:2px"></div>
<div style="left:1650px;top:215px;width:26px;height:604px;background:#2c2c2c;border-left:1px solid #1a1a1a"></div>
<div style="left:1665px;top:460px;width:2px;height:290px;background:#242424;"></div>
<div style="left:1651px;top:215px;width:24px;height:243px;background:linear-gradient(90deg,#5c5c5c,#4e4e4e 50%,#484848);border-top:1px solid #6a6a6a;border-bottom:1px solid #6a6a6a"></div>
<div style="left:1658px;top:331px;width:2px;height:2px;background:#0a0a0a;"></div>
<div style="left:1661px;top:331px;width:2px;height:2px;background:#0a0a0a;"></div>
<div style="left:1664px;top:331px;width:2px;height:2px;background:#0a0a0a;"></div>
<div style="left:1658px;top:334px;width:2px;height:2px;background:#0a0a0a;"></div>
<div style="left:1661px;top:334px;width:2px;height:2px;background:#0a0a0a;"></div>
<div style="left:1664px;top:334px;width:2px;height:2px;background:#0a0a0a;"></div>
<div style="left:1658px;top:337px;width:2px;height:2px;background:#0a0a0a;"></div>
<div style="left:1661px;top:337px;width:2px;height:2px;background:#0a0a0a;"></div>
<div style="left:1664px;top:337px;width:2px;height:2px;background:#0a0a0a;"></div>
<div style="left:1658px;top:340px;width:2px;height:2px;background:#0a0a0a;"></div>
<div style="left:1661px;top:340px;width:2px;height:2px;background:#0a0a0a;"></div>
<div style="left:1664px;top:340px;width:2px;height:2px;background:#0a0a0a;"></div>
<div style="left:1651px;top:751px;width:24px;height:34px;background:#3a3a3a;"></div>
<svg style="left:1657px;top:763px;" width="8" height="8" viewBox="0 0 8 8"><path d="M0 6.4 H8 L4 1.6 Z" fill="#555"/></svg>
<div style="left:1651px;top:785px;width:24px;height:30px;background:linear-gradient(90deg,#4a4a4a,#3c3c3c);border-top:1px solid #111;border-bottom:1px solid #111"></div>
<svg style="left:1657px;top:795px;" width="8" height="8" viewBox="0 0 8 8"><path d="M0 1.6 H8 L4 6.4 Z" fill="#7a7a7a"/></svg>
<div style="left:1004px;top:526px;width:646px;height:293px;background:#3a3a3a;border-left:1px solid #1c1c1c;border-top:1px solid #4e4e4e"></div>
<div style="left:1004px;top:495px;width:97px;height:31px;background:linear-gradient(#555,#474747 60%,#424242);border:1px solid #1a1a1a;border-bottom:none"></div>
<div style="left:1100px;top:495px;width:79px;height:31px;background:linear-gradient(#4e4e4e,#3e3e3e 70%,#383838);border:1px solid #121212"></div>
<div style="left:1114.3px;top:502.6px;font-size:19.33px;line-height:19.33px;font-family:'Liberation Sans',sans-serif;color:#cfcfcf;letter-spacing:0.379px;white-space:pre;">Noise</div>
<div style="left:1178px;top:495px;width:146px;height:31px;background:linear-gradient(#4e4e4e,#3e3e3e 70%,#383838);border:1px solid #121212"></div>
<div style="left:1192.9px;top:502.6px;font-size:19.33px;line-height:19.33px;font-family:'Liberation Sans',sans-serif;color:#cfcfcf;letter-spacing:0.788px;white-space:pre;">Temperature</div>
<div style="left:1323px;top:495px;width:103px;height:31px;background:linear-gradient(#4e4e4e,#3e3e3e 70%,#383838);border:1px solid #121212"></div>
<div style="left:1338.0px;top:502.6px;font-size:19.33px;line-height:19.33px;font-family:'Liberation Sans',sans-serif;color:#cfcfcf;letter-spacing:0.163px;white-space:pre;">OpenGL</div>
<div style="left:1016.5px;top:502.6px;font-size:19.33px;line-height:19.33px;font-family:'Liberation Sans',sans-serif;color:#d6d6d6;letter-spacing:0.839px;white-space:pre;">Density</div>
<div style="left:1101px;top:526px;width:549px;height:1px;background:#141414;"></div>
<div style="left:1005px;top:527px;width:1px;height:292px;background:#555;"></div>
<div style="left:1111.6px;top:544.6px;font-size:19.33px;line-height:19.33px;font-family:'Liberation Sans',sans-serif;color:#cdcdcd;letter-spacing:0.552px;white-space:pre;">Density Field</div>
<div style="left:1252px;top:539px;width:351px;height:31px;background:#131313;border:1px solid #262626"></div>
<div style="left:1256.0px;top:545.8px;font-size:19.80px;line-height:19.80px;font-family:'Liberation Mono',monospace;color:#f0f0f0;letter-spacing:-0.743px;white-space:pre;">density</div>
<div style="left:1604px;top:534px;width:37px;height:37px;background:linear-gradient(#4a4a4a,#3c3c3c);border:1px solid #1a1a1a"></div>
<svg style="left:1617px;top:547px;" width="10" height="10" viewBox="0 0 10 10"><path d="M0 2.0 H10 L5 8.0 Z" fill="#8a8a8a"/></svg>
<div style="left:1091.8px;top:587.6px;font-size:19.33px;line-height:19.33px;font-family:'Liberation Sans',sans-serif;color:#cdcdcd;letter-spacing:0.672px;white-space:pre;">Smoke Density</div>
<div style="left:1252px;top:577px;width:109px;height:39px;background:#131313;border:2px solid #2a2a2a"></div>
<div style="left:1256.5px;top:588.1px;font-size:19.80px;line-height:19.80px;font-family:'Liberation Mono',monospace;color:#f4f4f4;letter-spacing:-0.743px;white-space:pre;">1</div>
<div style="left:1368px;top:594px;width:272px;height:5px;background:#505050;border:1px solid #1c1c1c;border-radius:2px"></div>
<div style="left:1368px;top:594px;width:25.5px;height:5px;background:#0e3c7c;border:1px solid #0a1a30;border-radius:2px"></div>
<div style="left:1390.5px;top:577.0px;width:7px;height:38px;background:linear-gradient(90deg,#5a5a5a,#4a4a4a);border:1px solid #1a1a1a;border-radius:2px"></div>
<div style="left:1017.7px;top:630.6px;font-size:19.33px;line-height:19.33px;font-family:'Liberation Sans',sans-serif;color:#cdcdcd;letter-spacing:0.687px;white-space:pre;">Shadow Density Mult...</div>
<div style="left:1252px;top:621px;width:109px;height:38px;background:#131313;border:2px solid #2a2a2a"></div>
<div style="left:1256.5px;top:631.6px;font-size:19.80px;line-height:19.80px;font-family:'Liberation Mono',monospace;color:#f4f4f4;letter-spacing:-0.743px;white-space:pre;">1</div>
<div style="left:1368px;top:638px;width:272px;height:5px;background:#505050;border:1px solid #1c1c1c;border-radius:2px"></div>
<div style="left:1368px;top:638px;width:270.5px;height:5px;background:#0e3c7c;border:1px solid #0a1a30;border-radius:2px"></div>
<div style="left:1635.5px;top:621.0px;width:7px;height:38px;background:linear-gradient(90deg,#5a5a5a,#4a4a4a);border:1px solid #1a1a1a;border-radius:2px"></div>
<div style="left:1020.5px;top:670.6px;font-size:19.33px;line-height:19.33px;font-family:'Liberation Sans',sans-serif;color:#cfcfcf;letter-spacing:0.697px;white-space:pre;">Density Ramp</div>
<div style="left:1017px;top:693px;width:621px;height:123px;background:#3a3a3a;border:1px solid #262626;border-bottom:none"></div>
<div style="left:1025px;top:700px;width:71px;height:36px;background:linear-gradient(#555,#444 60%,#3e3e3e);border:1px solid #1a1a1a"></div>
<div style="left:1060px;top:701px;width:1px;height:34px;background:#1a1a1a;"></div>
<svg style="left:1036.5px;top:711.5px;" width="13.0" height="13.0" viewBox="0 0 13.0 13.0"><path d="M2 2 L11.0 11.0 M11.0 2 L2 11.0" stroke="#e8e8e8" stroke-width="2.8" stroke-linecap="butt"/></svg>
<svg style="left:1065px;top:705px;" width="26" height="26" viewBox="0 0 26 26"><path d="M13 3 V23 M3 13 H23" stroke="#1c1c3a" stroke-width="6.5"/><path d="M13 4 V22 M4 13 H22" stroke="#e8e8e8" stroke-width="4"/></svg>
<svg style="left:1031px;top:794px;" width="16" height="16" viewBox="0 0 16 16"><path d="M2 4 H14 L8 13 Z" fill="#f0f0f0" stroke="#111" stroke-width="1.5"/></svg>
<div style="left:1060px;top:796px;width:18px;height:14px;background:#f0f0f0;border:2px solid #000"></div>
<svg style="left:1060px;top:796px;" width="18" height="14" viewBox="0 0 18 14"><path d="M9 4 V11 M5 7 L9 11 L13 7" stroke="#000" stroke-width="2.5" fill="none"/></svg>
<svg style="left:1112px;top:699px;" width="508" height="92" viewBox="0 0 508 92"><rect x="0" y="0" width="508" height="92" fill="#262626"/><path d="M1.5 91 V1 H506" stroke="#d8d8d8" stroke-width="1.5" fill="none"/><path d="M103 88.5 L506 2 V88.5 Z" fill="#a8a8a8"/><path d="M2 88.5 H506" stroke="#555" stroke-width="1.5"/></svg>
<svg style="left:1100px;top:789px;overflow:visible" width="28" height="28" viewBox="0 0 28 28"><path d="M2 27 V8 L14 -3 L26 8 V27" fill="url(#kg)" stroke="#000" stroke-width="1.2"/><defs><linearGradient id="kg" x1="0" y1="0" x2="0" y2="1"><stop offset="0" stop-color="#505050"/><stop offset="1" stop-color="#383838"/></linearGradient></defs></svg>
<svg style="left:1201px;top:789px;overflow:visible" width="28" height="28" viewBox="0 0 28 28"><path d="M2 27 V8 L14 -3 L26 8 V27" fill="url(#kg)" stroke="#000" stroke-width="2.5"/><defs><linearGradient id="kg" x1="0" y1="0" x2="0" y2="1"><stop offset="0" stop-color="#505050"/><stop offset="1" stop-color="#383838"/></linearGradient></defs></svg>
<svg style="left:1603.5px;top:789px;overflow:visible" width="28" height="28" viewBox="0 0 28 28"><path d="M2 27 V8 L14 -3 L26 8 V27" fill="url(#kg)" stroke="#000" stroke-width="1.2"/><defs><linearGradient id="kg" x1="0" y1="0" x2="0" y2="1"><stop offset="0" stop-color="#505050"/><stop offset="1" stop-color="#383838"/></linearGradient></defs></svg>
<svg style="left:1106px;top:780px;" width="16" height="16" viewBox="0 0 16 16"><circle cx="8" cy="8" r="5.8" fill="#000"/></svg>
<svg style="left:1609px;top:694px;" width="16" height="16" viewBox="0 0 16 16"><circle cx="8" cy="8" r="5.8" fill="#000"/></svg>
<svg style="left:1207px;top:779px;" width="16" height="16" viewBox="0 0 16 16"><circle cx="8" cy="8" r="5.5" fill="#c38d2a" stroke="#000" stroke-width="1.5"/></svg>
<div style="left:1000px;top:819px;width:676px;height:10px;background:#4a4a4a;border-top:1px solid #666"></div>
<svg style="left:1281px;top:820px;" width="8" height="8" viewBox="0 0 8 8"><path d="M0 6.4 H8 L4 1.6 Z" fill="#8a8a8a"/></svg>
<div style="left:1320px;top:822px;width:1.5px;height:1.5px;background:#8a8a8a;"></div>
<div style="left:1320px;top:825px;width:1.5px;height:1.5px;background:#8a8a8a;"></div>
<div style="left:1323px;top:822px;width:1.5px;height:1.5px;background:#8a8a8a;"></div>
<div style="left:1323px;top:825px;width:1.5px;height:1.5px;background:#8a8a8a;"></div>
<div style="left:1326px;top:822px;width:1.5px;height:1.5px;background:#8a8a8a;"></div>
<div style="left:1326px;top:825px;width:1.5px;height:1.5px;background:#8a8a8a;"></div>
<div style="left:1329px;top:822px;width:1.5px;height:1.5px;background:#8a8a8a;"></div>
<div style="left:1329px;top:825px;width:1.5px;height:1.5px;background:#8a8a8a;"></div>
<div style="left:1332px;top:822px;width:1.5px;height:1.5px;background:#8a8a8a;"></div>
<div style="left:1332px;top:825px;width:1.5px;height:1.5px;background:#8a8a8a;"></div>
<div style="left:1335px;top:822px;width:1.5px;height:1.5px;background:#8a8a8a;"></div>
<div style="left:1335px;top:825px;width:1.5px;height:1.5px;background:#8a8a8a;"></div>
<div style="left:1338px;top:822px;width:1.5px;height:1.5px;background:#8a8a8a;"></div>
<div style="left:1338px;top:825px;width:1.5px;height:1.5px;background:#8a8a8a;"></div>
<div style="left:1341px;top:822px;width:1.5px;height:1.5px;background:#8a8a8a;"></div>
<div style="left:1341px;top:825px;width:1.5px;height:1.5px;background:#8a8a8a;"></div>
<div style="left:1344px;top:822px;width:1.5px;height:1.5px;background:#8a8a8a;"></div>
<div style="left:1344px;top:825px;width:1.5px;height:1.5px;background:#8a8a8a;"></div>
<div style="left:1347px;top:822px;width:1.5px;height:1.5px;background:#8a8a8a;"></div>
<div style="left:1347px;top:825px;width:1.5px;height:1.5px;background:#8a8a8a;"></div>
<div style="left:1350px;top:822px;width:1.5px;height:1.5px;background:#8a8a8a;"></div>
<div style="left:1350px;top:825px;width:1.5px;height:1.5px;background:#8a8a8a;"></div>
<div style="left:1353px;top:822px;width:1.5px;height:1.5px;background:#8a8a8a;"></div>
<div style="left:1353px;top:825px;width:1.5px;height:1.5px;background:#8a8a8a;"></div>
<div style="left:1356px;top:822px;width:1.5px;height:1.5px;background:#8a8a8a;"></div>
<div style="left:1356px;top:825px;width:1.5px;height:1.5px;background:#8a8a8a;"></div>
<svg style="left:1389px;top:820px;" width="8" height="8" viewBox="0 0 8 8"><path d="M0 1.6 H8 L4 6.4 Z" fill="#8a8a8a"/></svg>
<div style="left:1000px;top:829px;width:676px;height:29px;background:#2c2c2c;"></div>
<div style="left:1000px;top:832px;width:105px;height:26px;background:linear-gradient(#4d4d4d,#474747);"></div>
<div style="left:1104px;top:830px;width:3px;height:28px;background:#222;"></div>
<div style="left:1243px;top:830px;width:3px;height:28px;background:#222;"></div>
<div style="left:1423px;top:830px;width:3px;height:28px;background:#222;"></div>
<div style="left:1593px;top:830px;width:3px;height:28px;background:#222;"></div>
<div style="left:1011.0px;top:839.3px;font-size:15.00px;line-height:15.00px;font-family:'Liberation Sans',sans-serif;color:#d4d4d4;letter-spacing:0.523px;white-space:pre;font-style:italic;">/shop</div>
<svg style="left:1083.5px;top:839.5px;" width="13.0" height="13.0" viewBox="0 0 13.0 13.0"><path d="M2 2 L11.0 11.0 M11.0 2 L2 11.0" stroke="#e8e8e8" stroke-width="2.6" stroke-linecap="butt"/></svg>
<div style="left:1118.0px;top:839.3px;font-size:15.00px;line-height:15.00px;font-family:'Liberation Sans',sans-serif;color:#d4d4d4;letter-spacing:0.204px;white-space:pre;">Tree View</div>
<svg style="left:1221.5px;top:839.5px;" width="13.0" height="13.0" viewBox="0 0 13.0 13.0"><path d="M2 2 L11.0 11.0 M11.0 2 L2 11.0" stroke="#e8e8e8" stroke-width="2.6" stroke-linecap="butt"/></svg>
<div style="left:1255.0px;top:839.3px;font-size:15.00px;line-height:15.00px;font-family:'Liberation Sans',sans-serif;color:#d4d4d4;letter-spacing:0.524px;white-space:pre;">Material Palette</div>
<svg style="left:1401.5px;top:839.5px;" width="13.0" height="13.0" viewBox="0 0 13.0 13.0"><path d="M2 2 L11.0 11.0 M11.0 2 L2 11.0" stroke="#e8e8e8" stroke-width="2.6" stroke-linecap="butt"/></svg>
<div style="left:1436.0px;top:839.3px;font-size:15.00px;line-height:15.00px;font-family:'Liberation Sans',sans-serif;color:#d4d4d4;letter-spacing:0.405px;white-space:pre;">Asset Browser</div>
<svg style="left:1571.5px;top:839.5px;" width="13.0" height="13.0" viewBox="0 0 13.0 13.0"><path d="M2 2 L11.0 11.0 M11.0 2 L2 11.0" stroke="#e8e8e8" stroke-width="2.6" stroke-linecap="butt"/></svg>
<svg style="left:1603px;top:838px;" width="14" height="14" viewBox="0 0 14 14"><path d="M7 1 V13 M1 7 H13" stroke="#e0e0e0" stroke-width="3"/></svg>
<div style="left:1639px;top:839px;width:13px;height:12px;background:linear-gradient(135deg,#eee,#999);border:1px solid #222"></div>
<svg style="left:1661px;top:840px;" width="12" height="12" viewBox="0 0 12 12"><path d="M0 2.4000000000000004 H12 L6 9.600000000000001 Z" fill="#e0e0e0"/></svg>
<div style="left:1000px;top:858px;width:676px;height:1px;background:#2a2a2a;"></div>
<div style="left:1000px;top:859px;width:676px;height:47px;background:#3b3b3b;border-top:1px solid #505050"></div>
<div style="left:1084px;top:861px;width:457px;height:41px;background:linear-gradient(#414141,#3a3a3a);border:1px solid #0e0e0e;box-shadow:inset 1px 1px 0 #4a4a4a"></div>
<div style="left:1522px;top:862px;width:18px;height:39px;background:linear-gradient(#3a3a3a,#303030);"></div>
<svg style="left:1526px;top:876px;" width="10" height="10" viewBox="0 0 10 10"><path d="M0 2.0 H10 L5 8.0 Z" fill="#8a8a8a"/></svg>
<div style="left:1130.0px;top:870.1px;font-size:18.81px;line-height:18.81px;font-family:'Liberation Sans',sans-serif;color:#dedede;letter-spacing:0.610px;white-space:pre;">shop</div>
<div style="left:1001px;top:905px;width:675px;height:2px;background:#000;"></div>
<div style="left:1003px;top:907px;width:16px;height:49px;background:linear-gradient(#575757,#434343);border-left:1px solid #6a6a6a"></div>
<svg style="left:1006px;top:912px;" width="8" height="8" viewBox="0 0 8 8"><path d="M0 6.4 H8 L4 1.6 Z" fill="#000"/></svg>
<div style="left:1019px;top:907px;width:1px;height:49px;background:#000;"></div>
<div style="left:1020px;top:907px;width:656px;height:49px;background:#2e2e2e;border-top:1px solid #5a5a5a;border-left:1px solid #5a5a5a"></div>
<div style="left:1001px;top:955px;width:675px;height:2px;background:#000;"></div>
<div style="left:1000px;top:957px;width:676px;height:178px;background:#2b2b2b;"></div>
<div style="left:1547.3px;top:967.5px;font-size:31.35px;line-height:31.35px;font-weight:bold;color:#393939;white-space:pre;transform:scaleX(0.881);transform-origin:100% 50%;">Shaders</div>
<div style="left:1305.2px;top:1098.0px;font-size:31.35px;line-height:31.35px;font-weight:bold;color:#393939;white-space:pre;transform:scaleX(0.935);transform-origin:100% 50%;">Non-Commercial Edition</div>
<div style="left:1240.0px;top:988.4px;font-size:26.65px;line-height:26.65px;font-family:'Liberation Sans',sans-serif;color:#5ac8f8;letter-spacing:1.214px;white-space:pre;">sample_shader1</div>
<div style="left:30px;top:1089px;width:188px;height:40px;background:#323232;border:1px solid #2a2a2a"></div>
<div style="left:195px;top:1090px;width:22px;height:38px;background:#2c2c2c;"></div>
<svg style="left:201px;top:1097px;" width="10" height="24" viewBox="0 0 10 24"><path d="M1 10 L5 3 L9 10 Z M1 14 L5 21 L9 14 Z" fill="#555"/></svg>
<div style="left:47.0px;top:1100.6px;font-size:19.33px;line-height:19.33px;font-family:'Liberation Sans',sans-serif;color:#a4a4a4;letter-spacing:0.581px;white-space:pre;">Active Render</div>
<svg style="left:231.5px;top:1102.5px;" width="14" height="14" viewBox="0 0 14 14"><path d="M2 2 L12 12 M12 2 L2 12" stroke="#d0d0d0" stroke-width="3" stroke-linecap="butt"/></svg>
<div style="left:261px;top:1091px;width:4px;height:37px;background:#2a2a2a;border:1px solid #262626"></div>
<div style="left:265px;top:1108px;width:132px;height:3px;background:#2a2a2a;"></div>
<div style="left:412px;top:1107.5px;width:15px;height:4px;background:#d0d0d0;"></div>
<svg style="left:449px;top:1101.5px;" width="16" height="16" viewBox="0 0 16 16"><path d="M8 1 V15 M1 8 H15" stroke="#d0d0d0" stroke-width="4"/></svg>
<div style="left:565px;top:1096px;width:89px;height:30px;background:#111;border:1px solid #262626"></div>
<div style="left:569.0px;top:1102.2px;font-size:19.26px;line-height:19.26px;font-family:'Liberation Mono',monospace;color:#f0f0f0;letter-spacing:-0.722px;white-space:pre;">Snap 1</div>
<div style="left:711px;top:1091px;width:35px;height:36px;background:#333;border:1px solid #1a1a1a;box-shadow:inset 1px 1px 0 #444"></div>
<div style="left:719px;top:1097px;width:21px;height:22px;background:#eee;border:2px solid #111"></div>
<svg style="left:719px;top:1097px;" width="21" height="22" viewBox="0 0 21 22"><path d="M5 6 L16 16 M16 6 L5 16" stroke="#333" stroke-width="1.5"/></svg>
<svg style="left:738px;top:1116px;" width="8" height="10" viewBox="0 0 8 10"><path d="M1 1 L7 5 L1 9 Z" fill="#999"/></svg>
<div style="left:752px;top:1095px;width:98px;height:30px;background:#2a2a2a;"></div>
<div style="left:757.0px;top:1102.2px;font-size:19.26px;line-height:19.26px;font-family:'Liberation Mono',monospace;color:#4c4c4c;letter-spacing:-0.722px;white-space:pre;">0.5</div>
<div style="left:856px;top:1108px;width:116px;height:3px;background:#2c2c2c;"></div>
<div style="left:911px;top:1096px;width:4px;height:27px;background:#2c2c2c;border:1px solid #262626"></div>
<div style="left:33px;top:1153px;width:49px;height:42px;background:linear-gradient(#535353,#474747 50%,#3d3d3d);border:1px solid #101010;box-shadow:inset 1px 1px 0 #5e5e5e"></div>
<div style="left:81px;top:1153px;width:48px;height:42px;background:linear-gradient(#535353,#474747 50%,#3d3d3d);border:1px solid #101010;box-shadow:inset 1px 1px 0 #5e5e5e"></div>
<div style="left:128px;top:1153px;width:49px;height:42px;background:linear-gradient(#535353,#474747 50%,#3d3d3d);border:1px solid #101010;box-shadow:inset 1px 1px 0 #5e5e5e"></div>
<div style="left:176px;top:1153px;width:49px;height:42px;background:#b8861f;border:1px solid #101010"></div>
<div style="left:224px;top:1153px;width:49px;height:42px;background:linear-gradient(#535353,#474747 50%,#3d3d3d);border:1px solid #101010;box-shadow:inset 1px 1px 0 #5e5e5e"></div>
<div style="left:272px;top:1153px;width:49px;height:42px;background:linear-gradient(#535353,#474747 50%,#3d3d3d);border:1px solid #101010;box-shadow:inset 1px 1px 0 #5e5e5e"></div>
<svg style="left:33px;top:1153px;" width="288" height="42" viewBox="0 0 288 42"><defs><linearGradient id="tg" x1="0" y1="0" x2="1" y2="1"><stop offset="0" stop-color="#f0f0f0"/><stop offset="1" stop-color="#b8b8b8"/></linearGradient><linearGradient id="gg" x1="0" y1="0" x2="1" y2="0"><stop offset="0" stop-color="#3a8a20"/><stop offset="0.5" stop-color="#a8e878"/><stop offset="1" stop-color="#3a8a20"/></linearGradient></defs><rect x="4.5" y="12" width="7" height="18" rx="1.5" fill="#e8e8e8" stroke="#333" stroke-width="1"/><path d="M13 21 L27 12 V30 Z" fill="url(#tg)" stroke="#1a1a2a" stroke-width="1"/><path d="M29 21 L44 12 V30 Z" fill="url(#tg)" stroke="#1a1a2a" stroke-width="1"/><rect x="60" y="12" width="8" height="18" fill="url(#gg)" stroke="#1f4a10" stroke-width="1.2"/><path d="M69 21 L85 12 V30 Z" fill="url(#tg)" stroke="#1a1a2a" stroke-width="1"/><path d="M110 21 L131 9 V33 Z" fill="url(#tg)" stroke="#1a1a2a" stroke-width="1"/><rect x="154" y="8" width="27" height="24" fill="#e4e8e4" stroke="#222" stroke-width="2"/><path d="M205 9 L227 21 L205 33 Z" fill="url(#tg)" stroke="#1a1a2a" stroke-width="1"/><path d="M252 12 L269 21 L252 30 Z" fill="url(#tg)" stroke="#1a1a2a" stroke-width="1"/><rect x="270" y="12" width="8" height="18" fill="url(#gg)" stroke="#1f4a10" stroke-width="1.2"/></svg>
<div style="left:335px;top:1161px;width:88px;height:29px;background:#141414;border:1px solid #2a2a2a"></div>
<div style="left:339.5px;top:1165.2px;font-size:19.85px;line-height:19.85px;font-family:'Liberation Sans',sans-serif;color:#f4f4f4;letter-spacing:1.048px;white-space:pre;">1</div>
<div style="left:423px;top:1160px;width:60px;height:30px;background:linear-gradient(#555,#474747 50%,#3c3c3c);border:1px solid #101010;box-shadow:inset 1px 1px 0 #5e5e5e"></div>
<div style="left:452px;top:1161px;width:1px;height:28px;background:#101010;"></div>
<div style="left:431px;top:1172.5px;width:15px;height:5px;background:#dadada;border:1px solid #333"></div>
<svg style="left:460px;top:1167px;" width="16" height="16" viewBox="0 0 16 16"><path d="M8 1 V15 M1 8 H15" stroke="#dadada" stroke-width="4"/></svg>
<div style="left:498px;top:1161px;width:74px;height:29px;background:#141414;border:1px solid #2a2a2a"></div>
<div style="left:502.5px;top:1165.2px;font-size:19.85px;line-height:19.85px;font-family:'Liberation Sans',sans-serif;color:#f4f4f4;letter-spacing:1.048px;white-space:pre;">1</div>
<div style="left:577px;top:1140px;width:800px;height:55px;background:none;border-top:1px solid #bdbdbd;border-left:1px solid #bdbdbd;border-right:1px solid #bdbdbd"></div>
<div style="left:577px;top:1167px;width:799px;height:1px;background:#c8c8c8;"></div>
<svg style="left:577px;top:1140px;" width="800" height="55" viewBox="0 0 800 55"><rect x="16.13" y="22" width="1.2" height="10" fill="#b8b8b8"/><rect x="36.09" y="22" width="1.2" height="10" fill="#b8b8b8"/><rect x="56.05" y="22" width="1.2" height="10" fill="#b8b8b8"/><rect x="76.01" y="20" width="1.6" height="15" fill="#c8c8c8"/><rect x="95.97" y="22" width="1.2" height="10" fill="#b8b8b8"/><rect x="115.92" y="22" width="1.2" height="10" fill="#b8b8b8"/><rect x="135.88" y="22" width="1.2" height="10" fill="#b8b8b8"/><rect x="155.84" y="20" width="1.6" height="15" fill="#c8c8c8"/><rect x="175.80" y="22" width="1.2" height="10" fill="#b8b8b8"/><rect x="195.76" y="22" width="1.2" height="10" fill="#b8b8b8"/><rect x="215.72" y="22" width="1.2" height="10" fill="#b8b8b8"/><rect x="235.67" y="20" width="1.6" height="15" fill="#c8c8c8"/><rect x="255.63" y="22" width="1.2" height="10" fill="#b8b8b8"/><rect x="275.59" y="22" width="1.2" height="10" fill="#b8b8b8"/><rect x="295.55" y="22" width="1.2" height="10" fill="#b8b8b8"/><rect x="315.51" y="20" width="1.6" height="15" fill="#c8c8c8"/><rect x="335.47" y="22" width="1.2" height="10" fill="#b8b8b8"/><rect x="355.42" y="22" width="1.2" height="10" fill="#b8b8b8"/><rect x="375.38" y="22" width="1.2" height="10" fill="#b8b8b8"/><rect x="395.34" y="20" width="1.6" height="15" fill="#c8c8c8"/><rect x="415.30" y="22" width="1.2" height="10" fill="#b8b8b8"/><rect x="435.26" y="22" width="1.2" height="10" fill="#b8b8b8"/><rect x="455.22" y="22" width="1.2" height="10" fill="#b8b8b8"/><rect x="475.18" y="20" width="1.6" height="15" fill="#c8c8c8"/><rect x="495.13" y="22" width="1.2" height="10" fill="#b8b8b8"/><rect x="515.09" y="22" width="1.2" height="10" fill="#b8b8b8"/><rect x="535.05" y="22" width="1.2" height="10" fill="#b8b8b8"/><rect x="555.01" y="20" width="1.6" height="15" fill="#c8c8c8"/><rect x="574.97" y="22" width="1.2" height="10" fill="#b8b8b8"/><rect x="594.93" y="22" width="1.2" height="10" fill="#b8b8b8"/><rect x="614.88" y="22" width="1.2" height="10" fill="#b8b8b8"/><rect x="634.84" y="20" width="1.6" height="15" fill="#c8c8c8"/><rect x="654.80" y="22" width="1.2" height="10" fill="#b8b8b8"/><rect x="674.76" y="22" width="1.2" height="10" fill="#b8b8b8"/><rect x="694.72" y="22" width="1.2" height="10" fill="#b8b8b8"/><rect x="714.68" y="20" width="1.6" height="15" fill="#c8c8c8"/><rect x="734.63" y="22" width="1.2" height="10" fill="#b8b8b8"/><rect x="754.59" y="22" width="1.2" height="10" fill="#b8b8b8"/><rect x="774.55" y="22" width="1.2" height="10" fill="#b8b8b8"/><rect x="794.51" y="20" width="1.6" height="15" fill="#c8c8c8"/><rect x="0" y="15" width="1.6" height="40" fill="#c8c8c8"/><rect x="794" y="18" width="1.6" height="17" fill="#c8c8c8"/></svg>
<div style="left:655.0px;top:1145.3px;font-size:16.20px;line-height:16.20px;font-family:'Liberation Sans',sans-serif;color:#c8c8c8;letter-spacing:0.855px;white-space:pre;">24</div>
<div style="left:734.8px;top:1145.3px;font-size:16.20px;line-height:16.20px;font-family:'Liberation Sans',sans-serif;color:#c8c8c8;letter-spacing:0.855px;white-space:pre;">48</div>
<div style="left:814.7px;top:1145.3px;font-size:16.20px;line-height:16.20px;font-family:'Liberation Sans',sans-serif;color:#c8c8c8;letter-spacing:0.855px;white-space:pre;">72</div>
<div style="left:894.5px;top:1145.3px;font-size:16.20px;line-height:16.20px;font-family:'Liberation Sans',sans-serif;color:#c8c8c8;letter-spacing:0.855px;white-space:pre;">96</div>
<div style="left:974.3px;top:1145.3px;font-size:16.20px;line-height:16.20px;font-family:'Liberation Sans',sans-serif;color:#c8c8c8;letter-spacing:0.855px;white-space:pre;">120</div>
<div style="left:1054.2px;top:1145.3px;font-size:16.20px;line-height:16.20px;font-family:'Liberation Sans',sans-serif;color:#c8c8c8;letter-spacing:0.855px;white-space:pre;">144</div>
<div style="left:1134.0px;top:1145.3px;font-size:16.20px;line-height:16.20px;font-family:'Liberation Sans',sans-serif;color:#c8c8c8;letter-spacing:0.855px;white-space:pre;">168</div>
<div style="left:1213.8px;top:1145.3px;font-size:16.20px;line-height:16.20px;font-family:'Liberation Sans',sans-serif;color:#c8c8c8;letter-spacing:0.855px;white-space:pre;">192</div>
<div style="left:1293.7px;top:1145.3px;font-size:16.20px;line-height:16.20px;font-family:'Liberation Sans',sans-serif;color:#c8c8c8;letter-spacing:0.855px;white-space:pre;">216</div>
<div style="left:577px;top:1141px;width:31px;height:25px;background:#0a0a0a;border:1.5px solid #e8e8e8"></div>
<div style="left:586.0px;top:1142.7px;font-size:19.85px;line-height:19.85px;font-family:'Liberation Sans',sans-serif;color:#ffffff;letter-spacing:1.048px;white-space:pre;">1</div>
<div style="left:577px;top:1195px;width:799px;height:13px;background:linear-gradient(#5a5a5a,#4a4a4a 60%,#424242);"></div>
<div style="left:577px;top:1195px;width:19px;height:13px;background:#3c3c3c;border-right:1px solid #222"></div>
<div style="left:1357px;top:1195px;width:19px;height:13px;background:#3c3c3c;border-left:1px solid #222"></div>
<div style="left:583px;top:1201px;width:2px;height:2px;background:#111;"></div>
<div style="left:586px;top:1201px;width:2px;height:2px;background:#111;"></div>
<div style="left:589px;top:1201px;width:2px;height:2px;background:#111;"></div>
<div style="left:1363px;top:1201px;width:2px;height:2px;background:#111;"></div>
<div style="left:1366px;top:1201px;width:2px;height:2px;background:#111;"></div>
<div style="left:1369px;top:1201px;width:2px;height:2px;background:#111;"></div>
<div style="left:968px;top:1201px;width:2px;height:2px;background:#111;"></div>
<div style="left:971px;top:1201px;width:2px;height:2px;background:#111;"></div>
<div style="left:974px;top:1201px;width:2px;height:2px;background:#111;"></div>
<div style="left:977px;top:1201px;width:2px;height:2px;background:#111;"></div>
<div style="left:1381px;top:1161px;width:75px;height:29px;background:#141414;border:1px solid #2a2a2a"></div>
<div style="left:1386.0px;top:1167.2px;font-size:19.26px;line-height:19.26px;font-family:'Liberation Mono',monospace;color:#f4f4f4;letter-spacing:-0.722px;white-space:pre;">240</div>
<div style="left:1472px;top:1155px;width:37px;height:38px;background:linear-gradient(#555,#474747 50%,#3c3c3c);border:1px solid #101010;box-shadow:inset 1px 1px 0 #5e5e5e"></div>
<div style="left:1516px;top:1155px;width:149px;height:38px;background:linear-gradient(#555,#474747 50%,#3c3c3c);border:1px solid #101010;box-shadow:inset 1px 1px 0 #5e5e5e"></div>
<div style="left:1553px;top:1156px;width:1px;height:36px;background:#101010;"></div>
<div style="left:1590px;top:1156px;width:1px;height:36px;background:#101010;"></div>
<div style="left:1627px;top:1156px;width:1px;height:36px;background:#101010;"></div>
<div style="left:1378px;top:1214px;width:37px;height:38px;background:#3a3a3a;"></div>
<div style="left:1414px;top:1214px;width:36px;height:38px;background:#333;"></div>
<div style="left:1450px;top:1214px;width:166px;height:38px;background:linear-gradient(#4c4c4c,#444);"></div>
<div style="left:1615px;top:1214px;width:24px;height:38px;background:#393939;"></div>
<svg style="left:1621px;top:1226px;" width="12" height="24" viewBox="0 0 12 24"><path d="M1 10 L6 3 L11 10 Z M1 14 L6 21 L11 14 Z" fill="#8a8a8a"/></svg>
<div style="left:1468.0px;top:1224.6px;font-size:19.33px;line-height:19.33px;font-family:'Liberation Sans',sans-serif;color:#d0d0d0;letter-spacing:0.760px;white-space:pre;">Auto Update</div>
<svg style="left:60px;top:24px;" width="52" height="54" viewBox="0 0 52 54"><defs><linearGradient id="g1" x1="0" y1="0" x2="1" y2="1"><stop offset="0" stop-color="#e8eaec"/><stop offset="1" stop-color="#c8ccd4"/></linearGradient><linearGradient id="g2" x1="0" y1="0" x2="0" y2="1"><stop offset="0" stop-color="#a8b4c0"/><stop offset="0.5" stop-color="#9aa8b0"/><stop offset="1" stop-color="#b0bcc4"/></linearGradient><linearGradient id="g3" x1="0" y1="0" x2="1" y2="1"><stop offset="0" stop-color="#c0c8d0"/><stop offset="0.4" stop-color="#9aa0b0"/><stop offset="0.7" stop-color="#b8c0c0"/><stop offset="1" stop-color="#a8b0b8"/></linearGradient></defs><defs><radialGradient id="sh4"><stop offset="0" stop-color="#000" stop-opacity="0.45"/><stop offset="1" stop-color="#000" stop-opacity="0"/></radialGradient></defs><ellipse cx="32" cy="44" rx="18" ry="5" fill="url(#sh4)"/><path d="M4.8 9.8 L29.4 4.6 L46.2 14.4 L18.6 21.6 Z" fill="url(#g1)"/><path d="M4.8 9.8 L18.6 21.6 L20 47.9 L7.5 33.4 Z" fill="url(#g2)"/><path d="M18.6 21.6 L46.2 14.4 L44.2 38.7 L20 47.9 Z" fill="url(#g3)"/><path d="M4.8 9.8 L29.4 4.6 L46.2 14.4 L44.2 38.7 L20 47.9 L7.5 33.4 Z M18.6 21.6 L46.2 14.4 M18.6 21.6 L20 47.9" fill="none" stroke="#e8eef0" stroke-width="1"/><path d="M4.8 9.8 L29.4 4.6 L46.2 14.4 L44.2 38.7 L20 47.9 L7.5 33.4 Z" fill="none" stroke="#3a2a2a" stroke-width="0.6" stroke-opacity="0.6"/></svg>
<svg style="left:136px;top:24px;" width="54" height="54" viewBox="0 0 54 54"><defs><radialGradient id="g5" cx="0.38" cy="0.3" r="0.75"><stop offset="0" stop-color="#ffffff"/><stop offset="0.15" stop-color="#e0e2e4"/><stop offset="0.6" stop-color="#9ea4aa"/><stop offset="1" stop-color="#5a6066"/></radialGradient></defs><defs><radialGradient id="sh6"><stop offset="0" stop-color="#000" stop-opacity="0.45"/><stop offset="1" stop-color="#000" stop-opacity="0"/></radialGradient></defs><ellipse cx="28" cy="45" rx="20" ry="5" fill="url(#sh6)"/><circle cx="27" cy="25" r="21" fill="url(#g5)" stroke="#1a2a30" stroke-width="1"/></svg>
<svg style="left:220px;top:24px;" width="44" height="54" viewBox="0 0 44 54"><defs><linearGradient id="g7" x1="0" y1="0" x2="1" y2="0"><stop offset="0" stop-color="#b8c4c8"/><stop offset="0.3" stop-color="#d8dcdc"/><stop offset="0.5" stop-color="#a8b0b4"/><stop offset="0.8" stop-color="#8a949c"/><stop offset="1" stop-color="#b0b8c0"/></linearGradient><linearGradient id="g8" x1="0" y1="0" x2="1" y2="1"><stop offset="0" stop-color="#a0acb4"/><stop offset="1" stop-color="#c8d0d4"/></linearGradient></defs><defs><radialGradient id="sh9"><stop offset="0" stop-color="#000" stop-opacity="0.45"/><stop offset="1" stop-color="#000" stop-opacity="0"/></radialGradient></defs><ellipse cx="28" cy="46" rx="16" ry="5" fill="url(#sh9)"/><path d="M6.3 10.5 V41 A13.6 5.8 0 0 0 33.5 41 V10.5 Z" fill="url(#g7)" stroke="#0e3a40" stroke-width="1"/><ellipse cx="19.9" cy="10.5" rx="13.6" ry="6" fill="url(#g8)" stroke="#0e3a40" stroke-width="1"/><ellipse cx="19.9" cy="10.5" rx="12" ry="4.8" fill="none" stroke="#e0e8e8" stroke-width="0.8"/></svg>
<svg style="left:292px;top:30px;" width="50" height="44" viewBox="0 0 50 44"><defs><radialGradient id="g10" cx="0.45" cy="0.35" r="0.7"><stop offset="0" stop-color="#c8ccd4"/><stop offset="0.6" stop-color="#a4a8b4"/><stop offset="1" stop-color="#707480"/></radialGradient></defs><defs><radialGradient id="sh11"><stop offset="0" stop-color="#000" stop-opacity="0.45"/><stop offset="1" stop-color="#000" stop-opacity="0"/></radialGradient></defs><ellipse cx="25" cy="36" rx="20" ry="5" fill="url(#sh11)"/><ellipse cx="24.2" cy="21.5" rx="21.7" ry="14.4" fill="url(#g10)" stroke="#1e2a3a" stroke-width="1"/><path d="M4 19 Q24 30 44 19 M6 26 Q24 37 42 26 M24 7 V36 M12 9 Q10 22 13 34 M36 9 Q38 22 35 34" stroke="#606878" stroke-width="0.6" fill="none"/><ellipse cx="24.5" cy="20.5" rx="11" ry="4.2" fill="#222226"/><path d="M13.5 20.5 Q24.5 13 35.5 20.5" stroke="#8a8e9a" stroke-width="2" fill="none"/></svg>
<svg style="left:368px;top:44px;" width="52" height="24" viewBox="0 0 52 24"><defs><linearGradient id="g12" x1="0" y1="0" x2="0" y2="1"><stop offset="0" stop-color="#c8ccd0"/><stop offset="1" stop-color="#e8eaec"/></linearGradient></defs><path d="M10.5 5.6 L40.4 5.6 L47.6 19 L4.7 19 Z" fill="url(#g12)" stroke="#2a3038" stroke-width="0.8"/><path d="M8.5 10 H42.5 M6.5 14.5 H45 M18 5.6 L16 19 M25.5 5.6 V19 M33 5.6 L35 19" stroke="#9aa0a8" stroke-width="0.7"/></svg>
<svg style="left:444px;top:24px;" width="56" height="50" viewBox="0 0 56 50"><defs><radialGradient id="g13" cx="0.35" cy="0.3" r="0.8"><stop offset="0" stop-color="#f0f6ff"/><stop offset="0.35" stop-color="#a8c4e8"/><stop offset="1" stop-color="#3468b8"/></radialGradient></defs><defs><radialGradient id="sh14"><stop offset="0" stop-color="#000" stop-opacity="0.3"/><stop offset="1" stop-color="#000" stop-opacity="0"/></radialGradient></defs><ellipse cx="28" cy="45" rx="16" ry="3" fill="url(#sh14)"/><g stroke="#0e2050" stroke-width="2.4" fill="#0e2050"><circle cx="16.2" cy="16.4" r="11.5"/><circle cx="36.6" cy="28.2" r="14"/><path d="M20 24 Q24 20 26 18 L32 17 Q30 21 28 26 L24 30 Z"/></g><path d="M20 24 Q24 20 26 18 L32 17 Q30 21 28 26 L24 30 Z" fill="#7a9ed8"/><circle cx="16.2" cy="16.4" r="11.5" fill="url(#g13)"/><circle cx="36.6" cy="28.2" r="14" fill="url(#g13)"/></svg>
<svg style="left:515px;top:22px;" width="70" height="55" viewBox="0 0 70 55"><defs><radialGradient id="sh15"><stop offset="0" stop-color="#000" stop-opacity="0.4"/><stop offset="1" stop-color="#000" stop-opacity="0"/></radialGradient></defs><ellipse cx="42" cy="50" rx="10" ry="3" fill="url(#sh15)"/><path d="M36.5 51.6 L39.3 36.5 L40.0 21.5 L40.6 5.9 M40.0 21.5 L29.0 13.4 L21.5 11.8 M29.0 13.4 L28.1 5.4 M40.4 11.8 L48.9 5.9 M39.3 35.4 L29.0 28.5 L16.1 37.6 M29.0 28.5 L17.7 19.9 M24.2 24.7 L25.8 16.6 M22.0 32.2 L15.6 28.8 M39.5 36.5 L49.4 37.1 L62.3 49.4 M56.9 44.0 L61.8 40.8 M40.0 26.8 L49.9 21.5 L62.3 19.3 M49.9 21.5 L53.7 10.7 M57.5 20.2 L58.0 13.4 M39.5 33.3 L48.9 30.6 L60.1 24.7 M48.9 30.6 L62.3 32.2 " stroke="#3a76c4" stroke-width="3" fill="none" stroke-linecap="round" stroke-linejoin="round"/></svg>
<svg style="left:630px;top:26px;" width="22" height="48" viewBox="0 0 22 48"><defs><linearGradient id="g16" x1="0" y1="0" x2="1" y2="1"><stop offset="0" stop-color="#d8d8d8"/><stop offset="0.5" stop-color="#b0b0b0"/><stop offset="1" stop-color="#505050"/></linearGradient></defs><defs><radialGradient id="sh17"><stop offset="0" stop-color="#000" stop-opacity="0.35"/><stop offset="1" stop-color="#000" stop-opacity="0"/></radialGradient></defs><ellipse cx="16" cy="46" rx="10" ry="3" fill="url(#sh17)"/><path d="M4.2 26 L12.8 5 L24 3 V44 L16.6 44.3 Z" fill="url(#g16)" stroke="#111" stroke-width="1"/><path d="M4.2 26 L22 10 M12.8 5 L22 10 V40 M4.2 26 L22 34 M16.6 44.3 L22 38" stroke="#222" stroke-width="0.9" fill="none"/></svg>
<svg style="left:745px;top:28px;" width="52" height="46" viewBox="0 0 52 46"><defs><radialGradient id="g18" cx="0.4" cy="0.35" r="0.7"><stop offset="0" stop-color="#7a8284"/><stop offset="0.5" stop-color="#3a4244"/><stop offset="1" stop-color="#141818"/></radialGradient></defs><defs><radialGradient id="sh19"><stop offset="0" stop-color="#000" stop-opacity="0.4"/><stop offset="1" stop-color="#000" stop-opacity="0"/></radialGradient></defs><ellipse cx="28" cy="42" rx="20" ry="4" fill="url(#sh19)"/><circle cx="28" cy="12.6" r="9.8" fill="url(#g18)" stroke="#000" stroke-width="1"/><circle cx="28" cy="12.6" r="2.8" fill="#ddd" stroke="#000"/><circle cx="10.8" cy="21.2" r="9.8" fill="url(#g18)" stroke="#000" stroke-width="1"/><circle cx="10.8" cy="21.2" r="2.8" fill="#ddd" stroke="#000"/><rect x="14" y="20" width="11" height="9" fill="#9aa0a4" stroke="#000" stroke-width="0.8"/><path d="M13 30 H34 V42 H15 Z" fill="#1c1c1c" stroke="#000"/><rect x="19" y="33" width="6" height="6" fill="#555" stroke="#aaa" stroke-width="0.6"/><path d="M34 28 L46 25 V39 L34 40 Z" fill="#2a2a2a" stroke="#000"/><rect x="4" y="34" width="9" height="7" rx="2" fill="#8a8a8a" stroke="#000"/><path d="M30 32 Q36 30 40 34" stroke="#8a8a8a" stroke-width="1.5" fill="none"/></svg>
<svg style="left:830px;top:26px;" width="48" height="50" viewBox="0 0 48 50"><defs><radialGradient id="g20" cx="0.5" cy="0.6" r="0.6"><stop offset="0" stop-color="#fff8e0"/><stop offset="0.6" stop-color="#f0e890"/><stop offset="1" stop-color="#c8b040"/></radialGradient></defs><line x1="36.0" y1="24.0" x2="46.0" y2="24.0" stroke="#d8b830" stroke-width="2.6"/><path d="M48.0 24.0 L40.0 19.0 L40.0 29.0 Z" fill="#e8c838" stroke="#8a7010" stroke-width="0.5"/><line x1="32.5" y1="15.5" x2="39.6" y2="8.4" stroke="#d8b830" stroke-width="2.6"/><path d="M41.0 7.0 L31.8 9.2 L38.8 16.2 Z" fill="#e8c838" stroke="#8a7010" stroke-width="0.5"/><line x1="24.0" y1="12.0" x2="24.0" y2="2.0" stroke="#d8b830" stroke-width="2.6"/><path d="M24.0 0.0 L19.0 8.0 L29.0 8.0 Z" fill="#e8c838" stroke="#8a7010" stroke-width="0.5"/><line x1="15.5" y1="15.5" x2="8.4" y2="8.4" stroke="#d8b830" stroke-width="2.6"/><path d="M7.0 7.0 L9.2 16.2 L16.2 9.2 Z" fill="#e8c838" stroke="#8a7010" stroke-width="0.5"/><line x1="12.0" y1="24.0" x2="2.0" y2="24.0" stroke="#d8b830" stroke-width="2.6"/><path d="M0.0 24.0 L8.0 29.0 L8.0 19.0 Z" fill="#e8c838" stroke="#8a7010" stroke-width="0.5"/><line x1="15.5" y1="32.5" x2="8.4" y2="39.6" stroke="#d8b830" stroke-width="2.6"/><path d="M7.0 41.0 L16.2 38.8 L9.2 31.8 Z" fill="#e8c838" stroke="#8a7010" stroke-width="0.5"/><line x1="32.5" y1="32.5" x2="39.6" y2="39.6" stroke="#d8b830" stroke-width="2.6"/><path d="M41.0 41.0 L38.8 31.8 L31.8 38.8 Z" fill="#e8c838" stroke="#8a7010" stroke-width="0.5"/><path d="M17 33 Q13 28 14 22 A10 10 0 0 1 34 22 Q35 28 31 33 Z" fill="url(#g20)" stroke="#a89030" stroke-width="0.8"/><rect x="18.5" y="33" width="11" height="9" rx="2" fill="#b0b0b0" stroke="#666" stroke-width="0.7"/><path d="M18.5 36 H29.5 M18.5 39 H29.5" stroke="#777" stroke-width="0.8"/></svg>
<svg style="left:915px;top:24px;" width="60" height="53" viewBox="0 0 60 53"><path d="M10 23 A11.5 11.5 0 0 1 26.5 8 L22 11 L19 13 L13 23 Z" fill="#f09020" stroke="#0e1e48" stroke-width="1"/><g fill="#dcdcdc" stroke="#8a8a8a" stroke-width="0.5"><path d="M22.9 10.6 L33.0 8.9 L42.3 12.3 L38.1 16.5 L23.7 14.0 Z"/><path d="M11.0 28.8 L14.0 14.8 L19.9 13.1 L17.8 33.0 L14.0 32.2 Z"/><path d="M37.3 18.2 L45.3 19.9 L53.3 27.9 L50.0 37.3 L39.0 36.4 L36.0 27.5 Z"/><path d="M16.1 35.1 L30.5 36.4 L36.0 40.6 L35.6 47.4 L23.7 47.0 L16.9 40.2 Z"/></g><circle cx="27.5" cy="25" r="10" fill="#222"/><circle cx="27.5" cy="25" r="8.3" fill="#f2f0e0"/><line x1="27.5" y1="25" x2="47" y2="46" stroke="#e0d050" stroke-width="3.2"/><path d="M43 48 L51 42.5 L51.3 50 Z" fill="#e0c820" stroke="#a08a10" stroke-width="0.6"/></svg>
<svg style="left:1010px;top:26px;" width="54" height="48" viewBox="0 0 54 48"><defs><linearGradient id="g21" x1="0" y1="0" x2="0" y2="1"><stop offset="0" stop-color="#f8f0b0"/><stop offset="1" stop-color="#d8c040"/></linearGradient></defs><g stroke="#d8c038" stroke-width="2.4" opacity="0.9"><line x1="14" y1="14" x2="10" y2="38"/><line x1="26" y1="14" x2="26" y2="40"/><line x1="38" y1="14" x2="42" y2="38"/></g><path d="M4 36 L10 44 L16 37 Z M20 38 L26 46 L32 38 Z M36 37 L42 44 L48 36 Z" fill="#e8c838" stroke="#8a7010" stroke-width="0.5"/><path d="M3.4 3.5 H49 L37.4 13.9 H13.3 Z" fill="url(#g21)" stroke="#c0a020" stroke-width="1"/><ellipse cx="26" cy="8" rx="8" ry="3.5" fill="#fffbe8" opacity="0.8"/></svg>
<svg style="left:1118px;top:24px;" width="46" height="54" viewBox="0 0 46 54"><defs><radialGradient id="g24"><stop offset="0" stop-color="#f0e060" stop-opacity="0.55"/><stop offset="1" stop-color="#f0e060" stop-opacity="0"/></radialGradient><linearGradient id="g22" x1="0" y1="0" x2="1" y2="0"><stop offset="0" stop-color="#505050"/><stop offset="0.4" stop-color="#f0f0f0"/><stop offset="1" stop-color="#303030"/></linearGradient></defs><ellipse cx="23" cy="24" rx="17" ry="20" fill="url(#g24)"/><path d="M18 4 H27 L29 10 H16 Z" fill="url(#g22)"/><path d="M16 10 H29 L34 32 H12 Z" fill="#b04ca0" stroke="#602060" stroke-width="0.6"/><circle cx="19" cy="16" r="3" fill="#f0b020"/><path d="M22 28 Q20 22 25 20 Q29 22 27 28 Z" fill="#f0a020"/><circle cx="18" cy="24" r="2" fill="#f0b020"/><path d="M12 32 H34 L28 44 L32 50 H14 L18 44 Z" fill="url(#g22)" stroke="#222" stroke-width="0.6"/></svg>
<svg style="left:1230px;top:24px;" width="52" height="52" viewBox="0 0 52 52"><defs><radialGradient id="g25"><stop offset="0.4" stop-color="#b8b8b8" stop-opacity="0.5"/><stop offset="1" stop-color="#888" stop-opacity="0"/></radialGradient><radialGradient id="g26"><stop offset="0" stop-color="#f8e878"/><stop offset="1" stop-color="#e8d040" stop-opacity="0"/></radialGradient><linearGradient id="g27" x1="0" y1="1" x2="0" y2="0"><stop offset="0" stop-color="#ffe060"/><stop offset="0.4" stop-color="#f07010"/><stop offset="1" stop-color="#c01810"/></linearGradient></defs><circle cx="26" cy="23" r="20" fill="url(#g25)"/><ellipse cx="26" cy="42" rx="21" ry="7" fill="url(#g26)"/><path d="M26 37 Q15 36 15 27 Q15 19 21 14 Q21 20 24 21 Q22 12 28 4 Q27 13 33 17 Q38 22 37 28 Q36 36 26 37 Z" fill="url(#g27)" stroke="#a01000" stroke-width="0.6"/><path d="M26 36 Q21 35 22 29 Q24 31 26 26 Q29 31 31 30 Q31 35 26 36 Z" fill="#fff0a0"/></svg>
<svg style="left:1340px;top:24px;" width="52" height="54" viewBox="0 0 52 54"><defs><radialGradient id="g28" cx="0.45" cy="0.4" r="0.6"><stop offset="0" stop-color="#fff4b0"/><stop offset="0.6" stop-color="#f8c840"/><stop offset="1" stop-color="#e08a10"/></radialGradient></defs><g stroke="#e0c030" stroke-width="2.6"><line x1="30" y1="30" x2="45" y2="45"/><line x1="22" y1="36" x2="37" y2="50"/></g><path d="M48 49 L37 47 L46 38 Z M40 53 L29 51 L38 42 Z" fill="#e8c838"/><path d="M30.7 18.5 L38.0 21.0 L30.7 23.5 Z" fill="#f0d040" stroke="#b89010" stroke-width="0.5"/><path d="M30.6 23.7 L35.7 29.5 L28.2 28.0 Z" fill="#f0d040" stroke="#b89010" stroke-width="0.5"/><path d="M28.0 28.2 L29.5 35.7 L23.7 30.6 Z" fill="#f0d040" stroke="#b89010" stroke-width="0.5"/><path d="M23.5 30.7 L21.0 38.0 L18.5 30.7 Z" fill="#f0d040" stroke="#b89010" stroke-width="0.5"/><path d="M18.3 30.6 L12.5 35.7 L14.0 28.2 Z" fill="#f0d040" stroke="#b89010" stroke-width="0.5"/><path d="M13.8 28.0 L6.3 29.5 L11.4 23.7 Z" fill="#f0d040" stroke="#b89010" stroke-width="0.5"/><path d="M11.3 23.5 L4.0 21.0 L11.3 18.5 Z" fill="#f0d040" stroke="#b89010" stroke-width="0.5"/><path d="M11.4 18.3 L6.3 12.5 L13.8 14.0 Z" fill="#f0d040" stroke="#b89010" stroke-width="0.5"/><path d="M14.0 13.8 L12.5 6.3 L18.3 11.4 Z" fill="#f0d040" stroke="#b89010" stroke-width="0.5"/><path d="M18.5 11.3 L21.0 4.0 L23.5 11.3 Z" fill="#f0d040" stroke="#b89010" stroke-width="0.5"/><path d="M23.7 11.4 L29.5 6.3 L28.0 13.8 Z" fill="#f0d040" stroke="#b89010" stroke-width="0.5"/><path d="M28.2 14.0 L35.7 12.5 L30.6 18.3 Z" fill="#f0d040" stroke="#b89010" stroke-width="0.5"/><circle cx="21" cy="21" r="11" fill="url(#g28)" stroke="#d09010" stroke-width="0.6"/></svg>
<svg style="left:1455px;top:25px;" width="52" height="52" viewBox="0 0 52 52"><defs><radialGradient id="g29" cx="0.5" cy="0.3" r="0.7"><stop offset="0" stop-color="#f8f0a0"/><stop offset="0.7" stop-color="#e0d040"/><stop offset="1" stop-color="#b89a18"/></radialGradient><radialGradient id="g30" cx="0.4" cy="0.35" r="0.7"><stop offset="0" stop-color="#f0f0f0"/><stop offset="1" stop-color="#555"/></radialGradient></defs><circle cx="25.4" cy="25.7" r="23" fill="url(#g29)" stroke="#8a7010" stroke-width="1.2"/><circle cx="25.4" cy="25.7" r="20" fill="none" stroke="#f8f0b0" stroke-width="1"/><path d="M5 27 Q25 10 46 27 Q25 40 5 27 Z" fill="#b0b4bc" stroke="#444" stroke-width="1"/><circle cx="25.4" cy="24" r="7.5" fill="url(#g30)" stroke="#333" stroke-width="0.8"/></svg>
<svg style="left:1558px;top:26px;" width="48" height="50" viewBox="0 0 48 50"><defs><linearGradient id="g31" x1="0" y1="0" x2="0" y2="1"><stop offset="0" stop-color="#e8d060"/><stop offset="1" stop-color="#b89830"/></linearGradient></defs><path d="M3.3 34 V39 A20 9 0 0 0 43.3 39 V34 Z" fill="url(#g31)"/><ellipse cx="23.3" cy="34" rx="20" ry="9" fill="#f0e0cc" stroke="#a89060" stroke-width="0.6"/><path d="M12 32 V16 A14 14 0 0 1 38 18 L30 30 Z" fill="#9ab0c0" opacity="0.85" stroke="#4a80b8" stroke-width="0.8"/><path d="M12 32 L12 20 L30 16 L38 22 Z" fill="#c8e4f0" opacity="0.7"/><path d="M37 20 L26 30 L37 38 L34 30 Z" fill="#6a5aa8" stroke="#3a2a80" stroke-width="0.8"/><circle cx="12.6" cy="11" r="4.3" fill="#f8c030" stroke="#e08010" stroke-width="1.5"/></svg>
<svg style="left:1636px;top:28px;" width="16" height="48" viewBox="0 0 16 48"><defs><linearGradient id="g32" x1="0" y1="0" x2="1" y2="0"><stop offset="0" stop-color="#3a7a48"/><stop offset="0.5" stop-color="#8ac898"/><stop offset="1" stop-color="#4a8a58"/></linearGradient></defs><path d="M10 2 L14 1 V42 L8 44 L3 42 Q6 20 10 2 Z" fill="url(#g32)"/></svg>
<svg style="left:195px;top:146px;" width="30" height="30" viewBox="0 0 30 30"><g fill="none"><path d="M4 14 Q6 4 17 4 Q22 4 25 7" stroke="#141428" stroke-width="6.5"/><path d="M26 14 Q24 24 13 24 Q8 24 5 21" stroke="#141428" stroke-width="6.5"/><path d="M4 14 Q6 4 17 4 Q22 4 25 7" stroke="#e8e8e8" stroke-width="4"/><path d="M26 14 Q24 24 13 24 Q8 24 5 21" stroke="#e8e8e8" stroke-width="4"/></g><path d="M19.5 1 L28 0.5 L27 10 Z" fill="#e8e8e8" stroke="#141428" stroke-width="1.3"/><path d="M10.5 27 L2 27.5 L3 18 Z" fill="#e8e8e8" stroke="#141428" stroke-width="1.3"/></svg>
<svg style="left:236px;top:146px;" width="28" height="28" viewBox="0 0 28 28"><defs><linearGradient id="g33" x1="0" y1="0" x2="1" y2="0"><stop offset="0" stop-color="#f4f4f4"/><stop offset="0.6" stop-color="#d8d8d8"/><stop offset="1" stop-color="#a8a8a8"/></linearGradient></defs><rect x="5" y="4.5" width="8" height="22" fill="#000" opacity="0.8"/><rect x="17.5" y="4.5" width="8" height="22" fill="#000" opacity="0.8"/><rect x="3.4" y="3" width="7.9" height="22" fill="url(#g33)"/><rect x="15.9" y="3" width="7.9" height="22" fill="url(#g33)"/></svg>
<svg style="left:276px;top:146px;" width="28" height="28" viewBox="0 0 28 28"><defs><linearGradient id="g34" x1="0" y1="0" x2="0" y2="1"><stop offset="0" stop-color="#f07880"/><stop offset="0.5" stop-color="#e85058"/><stop offset="0.55" stop-color="#d82028"/><stop offset="1" stop-color="#e03038"/></linearGradient></defs><path d="M9.5 2 H18.5 L25 8.5 V17.5 L18.5 24 H9.5 L3 17.5 V8.5 Z" fill="url(#g34)" stroke="#8a0808" stroke-width="1.5"/><path d="M10 8.5 L18 16.5 M18 8.5 L10 16.5" stroke="#e8e8e8" stroke-width="2.8"/></svg>
<svg style="left:551px;top:148px;" width="28" height="28" viewBox="0 0 28 28"><rect x="1" y="1" width="20.5" height="22" fill="#eee" stroke="#14142a" stroke-width="1.2"/><rect x="2" y="2" width="18.5" height="4" fill="#b0b0b0"/><rect x="2" y="6" width="18.5" height="1.5" fill="#14142a"/><path d="M12.6 10.5 L24.5 19.5 L18 20 L13 26 Z" fill="#000" stroke="#fff" stroke-width="1.5" stroke-linejoin="miter"/></svg>
<svg style="left:824px;top:148px;" width="28" height="28" viewBox="0 0 28 28"><rect x="1" y="1" width="20.5" height="22" fill="#eee" stroke="#14142a" stroke-width="1.2"/><rect x="2" y="2" width="18.5" height="4" fill="#b0b0b0"/><rect x="2" y="6" width="18.5" height="1.5" fill="#14142a"/><path d="M12.6 10.5 L24.5 19.5 L18 20 L13 26 Z" fill="#000" stroke="#fff" stroke-width="1.5" stroke-linejoin="miter"/></svg>
<svg style="left:1005px;top:135px;" width="70" height="34" viewBox="0 0 70 34"><defs><linearGradient id="g35" x1="0" y1="0" x2="0" y2="1"><stop offset="0" stop-color="#f0f0f0"/><stop offset="1" stop-color="#9a9a9a"/></linearGradient></defs><path d="M3 13 L14 2 V8 H28 V19 H14 V25 Z" fill="url(#g35)" stroke="#222838" stroke-width="1.3"/><path d="M25 22 L31 26 L25 31 Z" fill="#8a8a8a"/><path d="M67 13 L55 2 V8 H41 V19 H55 V25 Z" fill="#8c8c8c" stroke="#2a2a38" stroke-width="1.3"/><path d="M61 22 L67 26 L61 31 Z" fill="#4a4a4a"/></svg>
<svg style="left:1005px;top:868px;" width="70" height="34" viewBox="0 0 70 34"><defs><linearGradient id="g36" x1="0" y1="0" x2="0" y2="1"><stop offset="0" stop-color="#f0f0f0"/><stop offset="1" stop-color="#9a9a9a"/></linearGradient></defs><path d="M3 13 L14 2 V8 H28 V19 H14 V25 Z" fill="url(#g36)" stroke="#222838" stroke-width="1.3"/><path d="M25 22 L31 26 L25 31 Z" fill="#8a8a8a"/><path d="M67 13 L55 2 V8 H41 V19 H55 V25 Z" fill="url(#g36)" stroke="#2a2a38" stroke-width="1.3"/><path d="M61 22 L67 26 L61 31 Z" fill="#8a8a8a"/></svg>
<svg style="left:1091px;top:130px;" width="34" height="36" viewBox="0 0 34 36"><defs><clipPath id="g37"><circle cx="17" cy="17" r="15.5"/></clipPath><radialGradient id="g38" cx="0.35" cy="0.3" r="0.8"><stop offset="0" stop-color="#fff" stop-opacity="0.3"/><stop offset="0.5" stop-color="#fff" stop-opacity="0"/><stop offset="1" stop-color="#000" stop-opacity="0.2"/></radialGradient></defs><defs><radialGradient id="sh39"><stop offset="0" stop-color="#000" stop-opacity="0.5"/><stop offset="1" stop-color="#000" stop-opacity="0"/></radialGradient></defs><ellipse cx="17" cy="31" rx="12" ry="3" fill="url(#sh39)"/><g clip-path="url(#g37)"><rect width="34" height="34" fill="#e8e8e8"/><path d="M0 0 H27 Q25 21 3 27 L0 27 Z" fill="#d41c20"/><path d="M7 34 Q31 30 34 7 V34 Z" fill="#2a5cb0"/></g><circle cx="17" cy="17" r="15.5" fill="url(#g38)"/></svg>
<svg style="left:1091px;top:863px;" width="34" height="36" viewBox="0 0 34 36"><defs><clipPath id="g40"><circle cx="17" cy="17" r="15.5"/></clipPath><radialGradient id="g41" cx="0.35" cy="0.3" r="0.8"><stop offset="0" stop-color="#fff" stop-opacity="0.3"/><stop offset="0.5" stop-color="#fff" stop-opacity="0"/><stop offset="1" stop-color="#000" stop-opacity="0.2"/></radialGradient></defs><defs><radialGradient id="sh42"><stop offset="0" stop-color="#000" stop-opacity="0.5"/><stop offset="1" stop-color="#000" stop-opacity="0"/></radialGradient></defs><ellipse cx="17" cy="31" rx="12" ry="3" fill="url(#sh42)"/><g clip-path="url(#g40)"><rect width="34" height="34" fill="#e8e8e8"/><path d="M0 0 H27 Q25 21 3 27 L0 27 Z" fill="#d41c20"/><path d="M7 34 Q31 30 34 7 V34 Z" fill="#2a5cb0"/></g><circle cx="17" cy="17" r="15.5" fill="url(#g41)"/></svg>
<svg style="left:1607px;top:137px;" width="30" height="24" viewBox="0 0 30 24"><path d="M2 11 H14" stroke="#ddd" stroke-width="1.5"/><path d="M13 6 L20 8 V14 L13 16 Z" fill="#d8d8d8" stroke="#222" stroke-width="1"/><rect x="20" y="4" width="6" height="14" fill="#bbb" stroke="#222"/><ellipse cx="16" cy="21" rx="11" ry="2" fill="#000" opacity="0.3"/></svg>
<svg style="left:1553px;top:869px;" width="30" height="24" viewBox="0 0 30 24"><path d="M2 11 H14" stroke="#ddd" stroke-width="1.5"/><path d="M13 6 L20 8 V14 L13 16 Z" fill="#d8d8d8" stroke="#222" stroke-width="1"/><rect x="20" y="4" width="6" height="14" fill="#bbb" stroke="#222"/><ellipse cx="16" cy="21" rx="11" ry="2" fill="#000" opacity="0.3"/></svg>
<svg style="left:1643px;top:135px;" width="30" height="30" viewBox="0 0 30 30"><circle cx="15" cy="15" r="13.5" fill="none" stroke="#4a7ab8" stroke-width="2.2"/><circle cx="15" cy="15" r="8.5" fill="none" stroke="#4a7ab8" stroke-width="2"/><circle cx="15" cy="15" r="3.5" fill="#2a70e0"/></svg>
<svg style="left:1589px;top:867px;" width="30" height="30" viewBox="0 0 30 30"><circle cx="15" cy="15" r="13.5" fill="none" stroke="#4a7ab8" stroke-width="2.2"/><circle cx="15" cy="15" r="8.5" fill="none" stroke="#4a7ab8" stroke-width="2"/><circle cx="15" cy="15" r="3.5" fill="#2a70e0"/></svg>
<svg style="left:1008px;top:180px;" width="28" height="30" viewBox="0 0 28 30"><g transform="scale(1.0)"><defs><linearGradient id="g43" x1="0" y1="0" x2="1" y2="1"><stop offset="0" stop-color="#f8b030"/><stop offset="1" stop-color="#d85a08"/></linearGradient></defs><path d="M2 6 L14 1 L26 6 V22 L14 28 L2 22 Z" fill="url(#g43)" stroke="#2a1a00" stroke-width="0.8"/><path d="M5 7 Q6 15 4 22 M9 8 Q11 17 8 26 M13 10 Q15 18 13 27 M18 9 Q17 17 19 25 M22 8 Q21 15 23 22 M6 4 L18 8 M10 3 L22 7" stroke="#1a0e00" stroke-width="1.3" fill="none"/></g></svg>
<svg style="left:1029px;top:206px;" width="10" height="6" viewBox="0 0 10 6"><path d="M0 0 H10 L5 6 Z" fill="#8a8a8a"/></svg>
<svg style="left:1533px;top:178px;" width="30" height="30" viewBox="0 0 30 30"><path d="M15 15 L24.2 18.8 M15 15 L18.8 24.2 M15 15 L11.2 24.2 M15 15 L5.8 18.8 M15 15 L5.8 11.2 M15 15 L11.2 5.8 M15 15 L18.8 5.8 M15 15 L24.2 11.2 " stroke="#222" stroke-width="7.5" stroke-linecap="round"/><circle cx="15" cy="15" r="8.5" fill="#222"/><path d="M15 15 L24.2 18.8 M15 15 L18.8 24.2 M15 15 L11.2 24.2 M15 15 L5.8 18.8 M15 15 L5.8 11.2 M15 15 L11.2 5.8 M15 15 L18.8 5.8 M15 15 L24.2 11.2 " stroke="#e4e4de" stroke-width="5.5" stroke-linecap="round"/><circle cx="15" cy="15" r="7.5" fill="#e4e4de"/><circle cx="15" cy="15" r="3.8" fill="#333" stroke="#111" stroke-width="0.8"/></svg>
<svg style="left:1556px;top:205px;" width="10" height="6" viewBox="0 0 10 6"><path d="M0 0 H10 L5 6 Z" fill="#8a8a8a"/></svg>
<svg style="left:1642px;top:866px;" width="30" height="30" viewBox="0 0 30 30"><path d="M15 15 L24.2 18.8 M15 15 L18.8 24.2 M15 15 L11.2 24.2 M15 15 L5.8 18.8 M15 15 L5.8 11.2 M15 15 L11.2 5.8 M15 15 L18.8 5.8 M15 15 L24.2 11.2 " stroke="#222" stroke-width="7.5" stroke-linecap="round"/><circle cx="15" cy="15" r="8.5" fill="#222"/><path d="M15 15 L24.2 18.8 M15 15 L18.8 24.2 M15 15 L11.2 24.2 M15 15 L5.8 18.8 M15 15 L5.8 11.2 M15 15 L11.2 5.8 M15 15 L18.8 5.8 M15 15 L24.2 11.2 " stroke="#e4e4de" stroke-width="5.5" stroke-linecap="round"/><circle cx="15" cy="15" r="7.5" fill="#e4e4de"/><circle cx="15" cy="15" r="3.8" fill="#333" stroke="#111" stroke-width="0.8"/></svg>
<svg style="left:1662px;top:892px;" width="10" height="6" viewBox="0 0 10 6"><path d="M0 0 H10 L5 6 Z" fill="#8a8a8a"/></svg>
<svg style="left:1572px;top:181px;" width="28" height="28" viewBox="0 0 28 28"><path d="M7 2 H12 L10.5 10 H16 L17.5 2 H22.5 L18.5 24 H13.5 L15 15 H9.5 L8 24 H3 Z" fill="#142a58" stroke="#e8e8e8" stroke-width="1.4" stroke-linejoin="round"/></svg>
<svg style="left:1592px;top:205px;" width="10" height="6" viewBox="0 0 10 6"><path d="M0 0 H10 L5 6 Z" fill="#8a8a8a"/></svg>
<svg style="left:1607px;top:180px;" width="28" height="28" viewBox="0 0 28 28"><circle cx="14" cy="14" r="12" fill="#2a2a2a" stroke="#e8e8e8" stroke-width="2"/><circle cx="15" cy="8" r="1.8" fill="#eee"/><path d="M11 12 H15 L13 21 H16" stroke="#eee" stroke-width="2.2" fill="none"/></svg>
<svg style="left:1642px;top:180px;" width="28" height="28" viewBox="0 0 28 28"><circle cx="14" cy="14" r="12" fill="#2a2a2a" stroke="#e8e8e8" stroke-width="2"/><path d="M9.5 10.5 Q9.5 6 14 6 Q18.5 6 18.5 10 Q18.5 13 14.5 15 V17" stroke="#eee" stroke-width="2.6" fill="none"/><circle cx="14.5" cy="21" r="1.6" fill="#eee"/></svg>
<svg style="left:1332px;top:299px;" width="30" height="30" viewBox="0 0 30 30"><defs><radialGradient id="g44"><stop offset="0" stop-color="#fff" stop-opacity="0.9"/><stop offset="1" stop-color="#fff" stop-opacity="0"/></radialGradient></defs><path d="M12 12 L23.0 12.0 A11 11 0 0 1 20.4 19.1 Z" fill="#ff4040"/><path d="M12 12 L20.4 19.1 A11 11 0 0 1 13.9 22.8 Z" fill="#ff9a30"/><path d="M12 12 L13.9 22.8 A11 11 0 0 1 6.5 21.5 Z" fill="#f8e040"/><path d="M12 12 L6.5 21.5 A11 11 0 0 1 1.7 15.8 Z" fill="#80e040"/><path d="M12 12 L1.7 15.8 A11 11 0 0 1 1.7 8.2 Z" fill="#30e0a0"/><path d="M12 12 L1.7 8.2 A11 11 0 0 1 6.5 2.5 Z" fill="#30c0f0"/><path d="M12 12 L6.5 2.5 A11 11 0 0 1 13.9 1.2 Z" fill="#5070f0"/><path d="M12 12 L13.9 1.2 A11 11 0 0 1 20.4 4.9 Z" fill="#b050f0"/><path d="M12 12 L20.4 4.9 A11 11 0 0 1 23.0 12.0 Z" fill="#f040b0"/><circle cx="12" cy="12" r="11" fill="url(#g44)"/><circle cx="12" cy="12" r="11.5" fill="none" stroke="#1a1a2a" stroke-width="1.2"/><path d="M24 20 L29 24 L24 28 Z" fill="#8a8a8a"/></svg>
<svg style="left:1030px;top:912px;" width="650" height="40" viewBox="0 0 650 40"><path d="M8 8 V30 M8 14 H16 M8 22 H16 M8 30 H16" stroke="#c8c8c8" stroke-width="1.5" fill="none"/><rect x="5" y="5" width="6" height="5" fill="#ddd"/><rect x="14" y="12" width="6" height="5" fill="#ddd"/><rect x="14" y="20" width="6" height="5" fill="#ddd"/><rect x="14" y="28" width="6" height="5" fill="#ddd"/><rect x="38" y="8" width="23" height="25" fill="#d8e0d8" stroke="#555"/><path d="M38 14 H61 M38 20 H61 M38 26 H61" stroke="#8a9a8a" stroke-width="2"/><rect x="72" y="8" width="28" height="26" fill="#888" /><rect x="72" y="8" width="28" height="6" fill="#aaa"/><rect x="72" y="18" width="14" height="16" fill="#eee" stroke="#333" stroke-width="0.8"/><path d="M75 22 H83 M75 26 H83 M75 30 H83" stroke="#333" stroke-width="1.5"/><rect x="110" y="8" width="24" height="24" fill="#f0f0f0" stroke="#1a1a2a" stroke-width="1"/><rect x="112" y="10" width="6" height="6" fill="#d01818"/><rect x="119" y="10" width="6" height="6" fill="#f07818"/><rect x="126" y="10" width="6" height="6" fill="#e8c010"/><rect x="112" y="17" width="6" height="6" fill="#1a4a90"/><rect x="119" y="17" width="6" height="6" fill="#40b020"/><rect x="126" y="17" width="6" height="6" fill="#80a8e0"/><rect x="112" y="24" width="6" height="6" fill="#000"/><rect x="119" y="24" width="6" height="6" fill="#888"/><rect x="126" y="24" width="6" height="6" fill="#c8d4c8"/><rect x="159" y="7" width="26" height="26" fill="#777" stroke="#222"/><rect x="163" y="12" width="12" height="7" fill="#eee" stroke="#222"/><rect x="169" y="22" width="12" height="7" fill="#eee" stroke="#222"/><path d="M196 8 H220 V28 L214 34 H196 Z" fill="#f0d860" stroke="#6a5a10"/><path d="M200 14 H214 M200 19 H216 M200 24 H210" stroke="#333" stroke-width="1.8"/><path d="M232 16 L244 10 L258 16 V30 L244 34 L232 30 Z" fill="#e09838" stroke="#6a3a08"/><path d="M232 16 L244 21 L258 16 M244 21 V34" stroke="#6a3a08" fill="none"/><path d="M355 4 V38" stroke="#8ab0e8" stroke-width="1" stroke-dasharray="2 2"/><rect x="350" y="10" width="10" height="5" fill="#eee" stroke="#222"/><rect x="350" y="25" width="10" height="5" fill="#eee" stroke="#222"/><path d="M378 20 H408" stroke="#8ab0e8" stroke-width="1" stroke-dasharray="2 2"/><rect x="382" y="17" width="9" height="6" fill="#eee" stroke="#222"/><rect x="396" y="17" width="9" height="6" fill="#eee" stroke="#222"/><path d="M428 4 V38" stroke="#5a90d8" stroke-width="2"/><rect x="418" y="12" width="8" height="5" fill="#eee" stroke="#222"/><rect x="431" y="26" width="9" height="6" fill="#eee" stroke="#222"/><path d="M450 18 H478 M450 23 H478" stroke="#5a90d8" stroke-width="2"/><rect x="452" y="11" width="9" height="5" fill="#eee" stroke="#222"/><rect x="466" y="26" width="9" height="5" fill="#eee" stroke="#222"/><path d="M492 14 H516 M492 26 H516 M498 6 V36 M510 6 V36" stroke="#5a90d8" stroke-width="2"/><rect x="486" y="10" width="8" height="5" fill="#eee" stroke="#222"/><rect x="500" y="22" width="8" height="5" fill="#eee" stroke="#222"/><path d="M525 14 H552 M525 26 H552 M532 6 V36 M545 6 V36" stroke="#5a90d8" stroke-width="2"/><circle cx="583" cy="17" r="9" fill="none" stroke="#e8e8e8" stroke-width="2.5"/><path d="M589 23 L598 32" stroke="#e8e8e8" stroke-width="3.5"/><rect x="609" y="6" width="26" height="28" fill="#f0f0f0"/><path d="M611 20 Q622 10 633 20 Q622 29 611 20 Z" fill="#111"/><circle cx="622" cy="19.5" r="3.5" fill="#eee"/></svg>
<svg style="left:1234px;top:1015px;" width="186" height="65" viewBox="0 0 186 65"><rect x="2" y="2" width="181" height="61" fill="none" stroke="#f8c000" stroke-width="2.6"/><defs><linearGradient id="ndg" x1="0" y1="0" x2="0" y2="1"><stop offset="0" stop-color="#a4a4a4"/><stop offset="1" stop-color="#c8c8c8"/></linearGradient><pattern id="hatch" width="6" height="6" patternUnits="userSpaceOnUse" patternTransform="rotate(45)"><rect width="6" height="6" fill="#000"/><rect x="0" y="0" width="1.2" height="6" fill="#e8c810"/></pattern></defs><rect x="3.3" y="3.3" width="178.4" height="35" fill="url(#hatch)"/><rect x="7" y="7" width="174.7" height="27.7" fill="url(#ndg)"/><rect x="3.3" y="38.3" width="157" height="21.8" fill="#6a6470"/><rect x="160" y="38.3" width="21.7" height="21.8" fill="#e8e8e8" stroke="#333" stroke-width="0.8"/><path d="M167 44 L175 49 L167 54 Z" fill="#111"/></svg>
<div style="left:1266.0px;top:1056.0px;font-size:15.99px;line-height:15.99px;font-family:'Liberation Sans',sans-serif;color:#d8d8d8;letter-spacing:0.558px;white-space:pre;">Material Shader</div>
<svg style="left:1241px;top:1022px;" width="25" height="27" viewBox="0 0 25 27"><g transform="scale(0.9)"><defs><linearGradient id="g45" x1="0" y1="0" x2="1" y2="1"><stop offset="0" stop-color="#f8b030"/><stop offset="1" stop-color="#d85a08"/></linearGradient></defs><path d="M2 6 L14 1 L26 6 V22 L14 28 L2 22 Z" fill="url(#g45)" stroke="#2a1a00" stroke-width="0.8"/><path d="M5 7 Q6 15 4 22 M9 8 Q11 17 8 26 M13 10 Q15 18 13 27 M18 9 Q17 17 19 25 M22 8 Q21 15 23 22 M6 4 L18 8 M10 3 L22 7" stroke="#1a0e00" stroke-width="1.3" fill="none"/></g></svg>
<svg style="left:528px;top:1095px;" width="32" height="26" viewBox="0 0 32 26"><rect x="2" y="6" width="27" height="17" rx="2" fill="#c8c8c8" stroke="#444"/><rect x="7" y="3" width="8" height="4" fill="#aaa" stroke="#444" stroke-width="0.7"/><circle cx="16" cy="15" r="7" fill="#8aa8c0" stroke="#333" stroke-width="1.5"/><circle cx="16" cy="15" r="3.5" fill="#305070"/><circle cx="13" cy="7" r="1.3" fill="#e02020"/></svg>
<svg style="left:1472px;top:1155px;" width="37" height="38" viewBox="0 0 37 38"><circle cx="13" cy="12" r="6.5" fill="none" stroke="#d8d8d8" stroke-width="4"/><path d="M17 16 L29 28 M23 22 L20 25 M27 26 L24 29" stroke="#d8d8d8" stroke-width="4"/></svg>
<svg style="left:1516px;top:1155px;" width="150" height="38" viewBox="0 0 150 38"><circle cx="18.5" cy="18" r="13" fill="#2a2a2a" stroke="#e8e8e8" stroke-width="2.5"/><circle cx="18.5" cy="18" r="9.5" fill="none" stroke="#111" stroke-width="1"/><path d="M18.5 12 V24 M12.5 18 H24.5" stroke="#e8e8e8" stroke-width="2.5"/><path d="M43 26 H70 Q70 12 58 12 Q52 12 49 17 L53 20 L41 21 L42 9 L46 13 Q51 7 58 7 Q75 7 75 24 V30 H43 Z" fill="#f4f4f4" stroke="#0a0a0a" stroke-width="1.5"/><path d="M66 31 L71 36 L76 31 Z" fill="#8a8a8a"/><path d="M81 13 H87 L96 5 V31 L87 23 H81 Z" fill="#9a9a9a" stroke="#222" stroke-width="1"/><ellipse cx="98" cy="18" rx="7.5" ry="13.5" fill="#1a2228" stroke="#e8e8e8" stroke-width="2"/><ellipse cx="96" cy="18" rx="3" ry="5" fill="#8a9090"/><rect x="118" y="6" width="20" height="22" fill="#eee" stroke="#222" stroke-width="1"/><rect x="118" y="6" width="20" height="5" fill="#999"/><path d="M127 17 L142 27 L136 28 L139 34 L136 35 L133 29 L127 33 Z" fill="#111" stroke="#fff" stroke-width="1.2"/></svg>
<svg style="left:1380px;top:1218px;" width="36" height="32" viewBox="0 0 36 32"><path d="M4 16 Q4 6 16 5 Q28 5 30 14 Q31 24 22 26 L16 27 Q5 26 4 16 Z" fill="#d8d8d8" stroke="#666" stroke-width="1"/><path d="M8 12 Q14 9 18 13 M10 18 Q16 15 22 19 M14 8 Q20 10 26 9 M16 22 Q22 20 28 16" stroke="#888" fill="none"/><path d="M31 25 L35 29 L31 32 Z" fill="#8a8a8a"/></svg>
<svg style="left:1417px;top:1220px;" width="30" height="30" viewBox="0 0 30 30"><g fill="none"><path d="M4 14 Q6 4 17 4 Q22 4 25 7" stroke="#2a2a2a" stroke-width="6.5"/><path d="M26 14 Q24 24 13 24 Q8 24 5 21" stroke="#2a2a2a" stroke-width="6.5"/><path d="M4 14 Q6 4 17 4 Q22 4 25 7" stroke="#a0a0a0" stroke-width="4"/><path d="M26 14 Q24 24 13 24 Q8 24 5 21" stroke="#a0a0a0" stroke-width="4"/></g><path d="M19.5 1 L28 0.5 L27 10 Z" fill="#a0a0a0" stroke="#2a2a2a" stroke-width="1.3"/><path d="M10.5 27 L2 27.5 L3 18 Z" fill="#a0a0a0" stroke="#2a2a2a" stroke-width="1.3"/></svg>
</body></html>
